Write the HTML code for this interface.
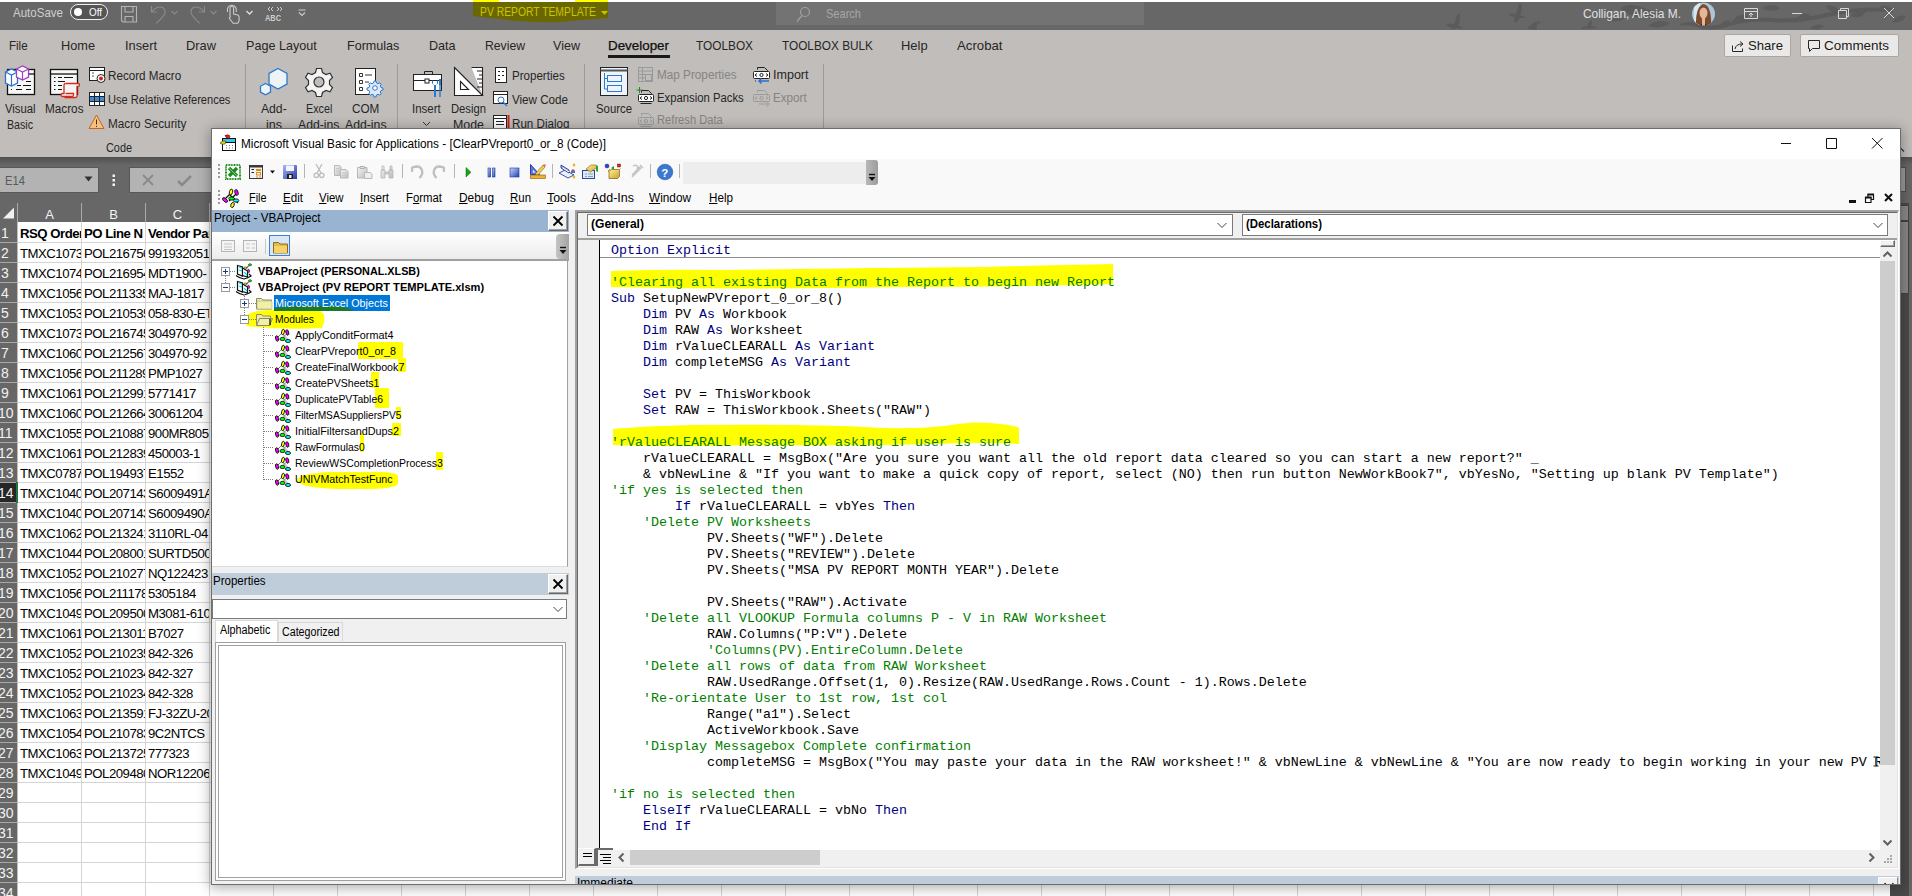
<!DOCTYPE html>
<html><head><meta charset="utf-8">
<style>
*{margin:0;padding:0;box-sizing:border-box}
html,body{width:1912px;height:896px;overflow:hidden;background:#676767}
body{position:relative;font-family:"Liberation Sans",sans-serif}
.a{position:absolute}
svg.a{overflow:visible}
.t{position:absolute;white-space:nowrap;line-height:1}
.rt{font-size:12.6px;color:#262626}
.rb{font-size:12px;color:#262626}
.sep{position:absolute;width:1px;background:#9e9a97}
.cell{position:absolute;font-size:13.2px;color:#000;overflow:hidden;white-space:nowrap;height:19px;line-height:19px}
.mono{font-family:"Liberation Mono",monospace;font-size:13.33px;line-height:16px;white-space:pre}
.cm{color:#008000}
.kw{color:#00007f}
.btn3d{background:#f0f0f0;border-top:1px solid #fff;border-left:1px solid #fff;border-right:1px solid #696969;border-bottom:1px solid #696969;box-shadow:inset -1px -1px 0 #a0a0a0}
u{text-decoration:underline;text-underline-offset:1px}
</style></head><body>
<!--collapse-->
<div class="a" style="left:0;top:0;width:1912px;height:2px;background:#fff"></div>
<div class="a" style="left:0;top:2px;width:1912px;height:28px;background:#676767"></div>
<div class="a" style="left:0;top:30px;width:1912px;height:127px;background:#c1bdba"></div>
<div class="a" style="left:18px;top:222px;width:1872px;height:674px;background:#fff"></div>
<div class="a" style="left:1890px;top:203px;width:22px;height:693px;background:#4a4a4a"></div>
<div class="a" style="left:1909px;top:157px;width:3px;height:739px;background:#676767"></div>
<div class="a" style="left:1900px;top:167px;width:6px;height:25px;background:#9a9a9a;border:1px solid #505050"></div>
<div class="a" style="left:1900px;top:205px;width:9px;height:16px;background:#8a8a8a;border:1px solid #444"></div>
<div class="a" style="left:1900px;top:221px;width:9px;height:73px;background:#888;border:1px solid #444"></div>
<svg class="a" style="left:1895px;top:146px" width="10" height="7"><path d="M1 5.5l4-4 4 4" fill="none" stroke="#333" stroke-width="1.2"></path></svg>
<div class="a" style="left:0;top:157px;width:1912px;height:8px;background:linear-gradient(#505050,#676767)"></div>
<div class="a" style="left:-1px;top:167px;width:100px;height:26px;background:#b3b3b3;border:1px solid #585858"></div>
<span class="t f" style="left: 5px; top: 174px; font-size: 13px; color: rgb(90, 90, 90); --w: 20px; display: inline-block; transform-origin: 0px 0px; transform: scaleX(0.8643);">E14</span>
<svg class="a" style="left:84px;top:176px" width="9" height="6"><path d="M0.5 0.5h8l-4 5z" fill="#333"></path></svg>
<svg class="a" style="left:112px;top:174px" width="4" height="13" fill="#f4f4f4"><rect x="0.5" y="0.5" width="2.5" height="2.5"></rect><rect x="0.5" y="5" width="2.5" height="2.5"></rect><rect x="0.5" y="9.5" width="2.5" height="2.5"></rect></svg>
<div class="a" style="left:129px;top:167px;width:90px;height:26px;background:#b3b3b3;border:1px solid #585858"></div>
<svg class="a" style="left:142px;top:174px" width="52" height="14" fill="none" stroke="#8a8a8a" stroke-width="1.8"><path d="M1 1l10 10 M11 1l-10 10"></path><path d="M36 7l4 4 9-9" stroke-width="2.6"></path></svg>
<svg class="a" style="left:2px;top:207px" width="13" height="12"><path d="M12 0.5v11h-11z" fill="#f0f0f0"></path></svg>
<div class="a" style="left:17px;top:203px;width:1px;height:19px;background:#a9a9a9"></div>
<div class="a" style="left:81px;top:203px;width:1px;height:19px;background:#a9a9a9"></div>
<div class="a" style="left:145px;top:203px;width:1px;height:19px;background:#a9a9a9"></div>
<div class="a" style="left:209px;top:203px;width:1px;height:19px;background:#a9a9a9"></div>
<span class="t" style="left:39.5px;top:208px;width:20px;text-align:center;font-size:13px;color:#f4f4f4">A</span>
<span class="t" style="left:103.5px;top:208px;width:20px;text-align:center;font-size:13px;color:#f4f4f4">B</span>
<span class="t" style="left:167.5px;top:208px;width:20px;text-align:center;font-size:13px;color:#f4f4f4">C</span>
<div class="a" style="left:0;top:222px;width:18px;height:674px;background:#676767"></div>
<div class="a" style="left:17px;top:222px;width:1px;height:674px;background:#bdbdbd"></div>
<div class="a" style="left:81px;top:222px;width:1px;height:674px;background:#d4d4d4"></div>
<div class="a" style="left:145px;top:222px;width:1px;height:674px;background:#d4d4d4"></div>
<div class="a" style="left:209px;top:222px;width:1px;height:674px;background:#d4d4d4"></div>
<div class="a" style="left:273px;top:222px;width:1px;height:674px;background:#d4d4d4"></div>
<div class="a" style="left:337px;top:222px;width:1px;height:674px;background:#d4d4d4"></div>
<div class="a" style="left:401px;top:222px;width:1px;height:674px;background:#d4d4d4"></div>
<div class="a" style="left:465px;top:222px;width:1px;height:674px;background:#d4d4d4"></div>
<div class="a" style="left:529px;top:222px;width:1px;height:674px;background:#d4d4d4"></div>
<div class="a" style="left:593px;top:222px;width:1px;height:674px;background:#d4d4d4"></div>
<div class="a" style="left:657px;top:222px;width:1px;height:674px;background:#d4d4d4"></div>
<div class="a" style="left:721px;top:222px;width:1px;height:674px;background:#d4d4d4"></div>
<div class="a" style="left:785px;top:222px;width:1px;height:674px;background:#d4d4d4"></div>
<div class="a" style="left:849px;top:222px;width:1px;height:674px;background:#d4d4d4"></div>
<div class="a" style="left:913px;top:222px;width:1px;height:674px;background:#d4d4d4"></div>
<div class="a" style="left:977px;top:222px;width:1px;height:674px;background:#d4d4d4"></div>
<div class="a" style="left:1041px;top:222px;width:1px;height:674px;background:#d4d4d4"></div>
<div class="a" style="left:1105px;top:222px;width:1px;height:674px;background:#d4d4d4"></div>
<div class="a" style="left:1169px;top:222px;width:1px;height:674px;background:#d4d4d4"></div>
<div class="a" style="left:1233px;top:222px;width:1px;height:674px;background:#d4d4d4"></div>
<div class="a" style="left:1297px;top:222px;width:1px;height:674px;background:#d4d4d4"></div>
<div class="a" style="left:1361px;top:222px;width:1px;height:674px;background:#d4d4d4"></div>
<div class="a" style="left:1425px;top:222px;width:1px;height:674px;background:#d4d4d4"></div>
<div class="a" style="left:1489px;top:222px;width:1px;height:674px;background:#d4d4d4"></div>
<div class="a" style="left:1553px;top:222px;width:1px;height:674px;background:#d4d4d4"></div>
<div class="a" style="left:1617px;top:222px;width:1px;height:674px;background:#d4d4d4"></div>
<div class="a" style="left:1681px;top:222px;width:1px;height:674px;background:#d4d4d4"></div>
<div class="a" style="left:1745px;top:222px;width:1px;height:674px;background:#d4d4d4"></div>
<div class="a" style="left:1809px;top:222px;width:1px;height:674px;background:#d4d4d4"></div>
<div class="a" style="left:1873px;top:222px;width:1px;height:674px;background:#d4d4d4"></div>
<div class="a" style="left:1937px;top:222px;width:1px;height:674px;background:#d4d4d4"></div>
<div class="a" style="left:18px;top:242px;width:1872px;height:1px;background:#d4d4d4"></div>
<div class="a" style="left:0;top:242px;width:17px;height:1px;background:#a8a8a8"></div>
<div class="a" style="left:18px;top:262px;width:1872px;height:1px;background:#d4d4d4"></div>
<div class="a" style="left:0;top:262px;width:17px;height:1px;background:#a8a8a8"></div>
<div class="a" style="left:18px;top:282px;width:1872px;height:1px;background:#d4d4d4"></div>
<div class="a" style="left:0;top:282px;width:17px;height:1px;background:#a8a8a8"></div>
<div class="a" style="left:18px;top:302px;width:1872px;height:1px;background:#d4d4d4"></div>
<div class="a" style="left:0;top:302px;width:17px;height:1px;background:#a8a8a8"></div>
<div class="a" style="left:18px;top:322px;width:1872px;height:1px;background:#d4d4d4"></div>
<div class="a" style="left:0;top:322px;width:17px;height:1px;background:#a8a8a8"></div>
<div class="a" style="left:18px;top:342px;width:1872px;height:1px;background:#d4d4d4"></div>
<div class="a" style="left:0;top:342px;width:17px;height:1px;background:#a8a8a8"></div>
<div class="a" style="left:18px;top:362px;width:1872px;height:1px;background:#d4d4d4"></div>
<div class="a" style="left:0;top:362px;width:17px;height:1px;background:#a8a8a8"></div>
<div class="a" style="left:18px;top:382px;width:1872px;height:1px;background:#d4d4d4"></div>
<div class="a" style="left:0;top:382px;width:17px;height:1px;background:#a8a8a8"></div>
<div class="a" style="left:18px;top:402px;width:1872px;height:1px;background:#d4d4d4"></div>
<div class="a" style="left:0;top:402px;width:17px;height:1px;background:#a8a8a8"></div>
<div class="a" style="left:18px;top:422px;width:1872px;height:1px;background:#d4d4d4"></div>
<div class="a" style="left:0;top:422px;width:17px;height:1px;background:#a8a8a8"></div>
<div class="a" style="left:18px;top:442px;width:1872px;height:1px;background:#d4d4d4"></div>
<div class="a" style="left:0;top:442px;width:17px;height:1px;background:#a8a8a8"></div>
<div class="a" style="left:18px;top:462px;width:1872px;height:1px;background:#d4d4d4"></div>
<div class="a" style="left:0;top:462px;width:17px;height:1px;background:#a8a8a8"></div>
<div class="a" style="left:18px;top:482px;width:1872px;height:1px;background:#d4d4d4"></div>
<div class="a" style="left:0;top:482px;width:17px;height:1px;background:#a8a8a8"></div>
<div class="a" style="left:18px;top:502px;width:1872px;height:1px;background:#d4d4d4"></div>
<div class="a" style="left:0;top:502px;width:17px;height:1px;background:#a8a8a8"></div>
<div class="a" style="left:18px;top:522px;width:1872px;height:1px;background:#d4d4d4"></div>
<div class="a" style="left:0;top:522px;width:17px;height:1px;background:#a8a8a8"></div>
<div class="a" style="left:18px;top:542px;width:1872px;height:1px;background:#d4d4d4"></div>
<div class="a" style="left:0;top:542px;width:17px;height:1px;background:#a8a8a8"></div>
<div class="a" style="left:18px;top:562px;width:1872px;height:1px;background:#d4d4d4"></div>
<div class="a" style="left:0;top:562px;width:17px;height:1px;background:#a8a8a8"></div>
<div class="a" style="left:18px;top:582px;width:1872px;height:1px;background:#d4d4d4"></div>
<div class="a" style="left:0;top:582px;width:17px;height:1px;background:#a8a8a8"></div>
<div class="a" style="left:18px;top:602px;width:1872px;height:1px;background:#d4d4d4"></div>
<div class="a" style="left:0;top:602px;width:17px;height:1px;background:#a8a8a8"></div>
<div class="a" style="left:18px;top:622px;width:1872px;height:1px;background:#d4d4d4"></div>
<div class="a" style="left:0;top:622px;width:17px;height:1px;background:#a8a8a8"></div>
<div class="a" style="left:18px;top:642px;width:1872px;height:1px;background:#d4d4d4"></div>
<div class="a" style="left:0;top:642px;width:17px;height:1px;background:#a8a8a8"></div>
<div class="a" style="left:18px;top:662px;width:1872px;height:1px;background:#d4d4d4"></div>
<div class="a" style="left:0;top:662px;width:17px;height:1px;background:#a8a8a8"></div>
<div class="a" style="left:18px;top:682px;width:1872px;height:1px;background:#d4d4d4"></div>
<div class="a" style="left:0;top:682px;width:17px;height:1px;background:#a8a8a8"></div>
<div class="a" style="left:18px;top:702px;width:1872px;height:1px;background:#d4d4d4"></div>
<div class="a" style="left:0;top:702px;width:17px;height:1px;background:#a8a8a8"></div>
<div class="a" style="left:18px;top:722px;width:1872px;height:1px;background:#d4d4d4"></div>
<div class="a" style="left:0;top:722px;width:17px;height:1px;background:#a8a8a8"></div>
<div class="a" style="left:18px;top:742px;width:1872px;height:1px;background:#d4d4d4"></div>
<div class="a" style="left:0;top:742px;width:17px;height:1px;background:#a8a8a8"></div>
<div class="a" style="left:18px;top:762px;width:1872px;height:1px;background:#d4d4d4"></div>
<div class="a" style="left:0;top:762px;width:17px;height:1px;background:#a8a8a8"></div>
<div class="a" style="left:18px;top:782px;width:1872px;height:1px;background:#d4d4d4"></div>
<div class="a" style="left:0;top:782px;width:17px;height:1px;background:#a8a8a8"></div>
<div class="a" style="left:18px;top:802px;width:1872px;height:1px;background:#d4d4d4"></div>
<div class="a" style="left:0;top:802px;width:17px;height:1px;background:#a8a8a8"></div>
<div class="a" style="left:18px;top:822px;width:1872px;height:1px;background:#d4d4d4"></div>
<div class="a" style="left:0;top:822px;width:17px;height:1px;background:#a8a8a8"></div>
<div class="a" style="left:18px;top:842px;width:1872px;height:1px;background:#d4d4d4"></div>
<div class="a" style="left:0;top:842px;width:17px;height:1px;background:#a8a8a8"></div>
<div class="a" style="left:18px;top:862px;width:1872px;height:1px;background:#d4d4d4"></div>
<div class="a" style="left:0;top:862px;width:17px;height:1px;background:#a8a8a8"></div>
<div class="a" style="left:18px;top:882px;width:1872px;height:1px;background:#d4d4d4"></div>
<div class="a" style="left:0;top:882px;width:17px;height:1px;background:#a8a8a8"></div>
<div class="a" style="left:18px;top:902px;width:1872px;height:1px;background:#d4d4d4"></div>
<div class="a" style="left:0;top:902px;width:17px;height:1px;background:#a8a8a8"></div>
<div class="a" style="left:0;top:483px;width:16px;height:19px;background:#262626"></div>
<div class="a" style="left:16px;top:482px;width:2px;height:21px;background:#217346"></div>
<span class="t" style="left:1px;top:226px;font-size:14px;color:#f2f2f2">1</span>
<span class="t" style="left:1px;top:246px;font-size:14px;color:#f2f2f2">2</span>
<span class="t" style="left:1px;top:266px;font-size:14px;color:#f2f2f2">3</span>
<span class="t" style="left:1px;top:286px;font-size:14px;color:#f2f2f2">4</span>
<span class="t" style="left:1px;top:306px;font-size:14px;color:#f2f2f2">5</span>
<span class="t" style="left:1px;top:326px;font-size:14px;color:#f2f2f2">6</span>
<span class="t" style="left:1px;top:346px;font-size:14px;color:#f2f2f2">7</span>
<span class="t" style="left:1px;top:366px;font-size:14px;color:#f2f2f2">8</span>
<span class="t" style="left:1px;top:386px;font-size:14px;color:#f2f2f2">9</span>
<span class="t" style="left:-2px;top:406px;font-size:14px;color:#f2f2f2">10</span>
<span class="t" style="left:-2px;top:426px;font-size:14px;color:#f2f2f2">11</span>
<span class="t" style="left:-2px;top:446px;font-size:14px;color:#f2f2f2">12</span>
<span class="t" style="left:-2px;top:466px;font-size:14px;color:#f2f2f2">13</span>
<span class="t" style="left:-2px;top:486px;font-size:14px;color:#f2f2f2">14</span>
<span class="t" style="left:-2px;top:506px;font-size:14px;color:#f2f2f2">15</span>
<span class="t" style="left:-2px;top:526px;font-size:14px;color:#f2f2f2">16</span>
<span class="t" style="left:-2px;top:546px;font-size:14px;color:#f2f2f2">17</span>
<span class="t" style="left:-2px;top:566px;font-size:14px;color:#f2f2f2">18</span>
<span class="t" style="left:-2px;top:586px;font-size:14px;color:#f2f2f2">19</span>
<span class="t" style="left:-2px;top:606px;font-size:14px;color:#f2f2f2">20</span>
<span class="t" style="left:-2px;top:626px;font-size:14px;color:#f2f2f2">21</span>
<span class="t" style="left:-2px;top:646px;font-size:14px;color:#f2f2f2">22</span>
<span class="t" style="left:-2px;top:666px;font-size:14px;color:#f2f2f2">23</span>
<span class="t" style="left:-2px;top:686px;font-size:14px;color:#f2f2f2">24</span>
<span class="t" style="left:-2px;top:706px;font-size:14px;color:#f2f2f2">25</span>
<span class="t" style="left:-2px;top:726px;font-size:14px;color:#f2f2f2">26</span>
<span class="t" style="left:-2px;top:746px;font-size:14px;color:#f2f2f2">27</span>
<span class="t" style="left:-2px;top:766px;font-size:14px;color:#f2f2f2">28</span>
<span class="t" style="left:-2px;top:786px;font-size:14px;color:#f2f2f2">29</span>
<span class="t" style="left:-2px;top:806px;font-size:14px;color:#f2f2f2">30</span>
<span class="t" style="left:-2px;top:826px;font-size:14px;color:#f2f2f2">31</span>
<span class="t" style="left:-2px;top:846px;font-size:14px;color:#f2f2f2">32</span>
<span class="t" style="left:-2px;top:866px;font-size:14px;color:#f2f2f2">33</span>
<span class="t" style="left:-2px;top:886px;font-size:14px;color:#f2f2f2">34</span>
<div class="cell" style="left:18px;top:224px;letter-spacing:-0.5px;width:63px;padding-left:2px;font-weight:bold;">RSQ Order</div>
<div class="cell" style="left:82px;top:224px;letter-spacing:-0.5px;width:63px;padding-left:2px;font-weight:bold;">PO Line N</div>
<div class="cell" style="left:146px;top:224px;letter-spacing:-0.5px;width:63px;padding-left:2px;font-weight:bold;">Vendor Part</div>
<div class="cell" style="left:18px;top:244px;letter-spacing:-0.5px;width:63px;padding-left:2px;">TMXC10739</div>
<div class="cell" style="left:82px;top:244px;letter-spacing:-0.5px;width:63px;padding-left:2px;">POL2167501</div>
<div class="cell" style="left:146px;top:244px;letter-spacing:-0.5px;width:63px;padding-left:2px;">991932051</div>
<div class="cell" style="left:18px;top:264px;letter-spacing:-0.5px;width:63px;padding-left:2px;">TMXC10749</div>
<div class="cell" style="left:82px;top:264px;letter-spacing:-0.5px;width:63px;padding-left:2px;">POL2169541</div>
<div class="cell" style="left:146px;top:264px;letter-spacing:-0.5px;width:63px;padding-left:2px;">MDT1900-</div>
<div class="cell" style="left:18px;top:284px;letter-spacing:-0.5px;width:63px;padding-left:2px;">TMXC10569</div>
<div class="cell" style="left:82px;top:284px;letter-spacing:-0.5px;width:63px;padding-left:2px;">POL2113351</div>
<div class="cell" style="left:146px;top:284px;letter-spacing:-0.5px;width:63px;padding-left:2px;">MAJ-1817</div>
<div class="cell" style="left:18px;top:304px;letter-spacing:-0.5px;width:63px;padding-left:2px;">TMXC10539</div>
<div class="cell" style="left:82px;top:304px;letter-spacing:-0.5px;width:63px;padding-left:2px;">POL2105351</div>
<div class="cell" style="left:146px;top:304px;letter-spacing:-0.5px;width:63px;padding-left:2px;">058-830-ET</div>
<div class="cell" style="left:18px;top:324px;letter-spacing:-0.5px;width:63px;padding-left:2px;">TMXC10739</div>
<div class="cell" style="left:82px;top:324px;letter-spacing:-0.5px;width:63px;padding-left:2px;">POL2167451</div>
<div class="cell" style="left:146px;top:324px;letter-spacing:-0.5px;width:63px;padding-left:2px;">304970-92</div>
<div class="cell" style="left:18px;top:344px;letter-spacing:-0.5px;width:63px;padding-left:2px;">TMXC10609</div>
<div class="cell" style="left:82px;top:344px;letter-spacing:-0.5px;width:63px;padding-left:2px;">POL2125671</div>
<div class="cell" style="left:146px;top:344px;letter-spacing:-0.5px;width:63px;padding-left:2px;">304970-92</div>
<div class="cell" style="left:18px;top:364px;letter-spacing:-0.5px;width:63px;padding-left:2px;">TMXC10569</div>
<div class="cell" style="left:82px;top:364px;letter-spacing:-0.5px;width:63px;padding-left:2px;">POL2112891</div>
<div class="cell" style="left:146px;top:364px;letter-spacing:-0.5px;width:63px;padding-left:2px;">PMP1027</div>
<div class="cell" style="left:18px;top:384px;letter-spacing:-0.5px;width:63px;padding-left:2px;">TMXC10619</div>
<div class="cell" style="left:82px;top:384px;letter-spacing:-0.5px;width:63px;padding-left:2px;">POL2129911</div>
<div class="cell" style="left:146px;top:384px;letter-spacing:-0.5px;width:63px;padding-left:2px;">5771417</div>
<div class="cell" style="left:18px;top:404px;letter-spacing:-0.5px;width:63px;padding-left:2px;">TMXC10609</div>
<div class="cell" style="left:82px;top:404px;letter-spacing:-0.5px;width:63px;padding-left:2px;">POL2126641</div>
<div class="cell" style="left:146px;top:404px;letter-spacing:-0.5px;width:63px;padding-left:2px;">30061204</div>
<div class="cell" style="left:18px;top:424px;letter-spacing:-0.5px;width:63px;padding-left:2px;">TMXC10559</div>
<div class="cell" style="left:82px;top:424px;letter-spacing:-0.5px;width:63px;padding-left:2px;">POL2108871</div>
<div class="cell" style="left:146px;top:424px;letter-spacing:-0.5px;width:63px;padding-left:2px;">900MR805</div>
<div class="cell" style="left:18px;top:444px;letter-spacing:-0.5px;width:63px;padding-left:2px;">TMXC10619</div>
<div class="cell" style="left:82px;top:444px;letter-spacing:-0.5px;width:63px;padding-left:2px;">POL2128391</div>
<div class="cell" style="left:146px;top:444px;letter-spacing:-0.5px;width:63px;padding-left:2px;">450003-1</div>
<div class="cell" style="left:18px;top:464px;letter-spacing:-0.5px;width:63px;padding-left:2px;">TMXC07879</div>
<div class="cell" style="left:82px;top:464px;letter-spacing:-0.5px;width:63px;padding-left:2px;">POL1949371</div>
<div class="cell" style="left:146px;top:464px;letter-spacing:-0.5px;width:63px;padding-left:2px;">E1552</div>
<div class="cell" style="left:18px;top:484px;letter-spacing:-0.5px;width:63px;padding-left:2px;">TMXC10409</div>
<div class="cell" style="left:82px;top:484px;letter-spacing:-0.5px;width:63px;padding-left:2px;">POL2071431</div>
<div class="cell" style="left:146px;top:484px;letter-spacing:-0.5px;width:63px;padding-left:2px;">S6009491A</div>
<div class="cell" style="left:18px;top:504px;letter-spacing:-0.5px;width:63px;padding-left:2px;">TMXC10409</div>
<div class="cell" style="left:82px;top:504px;letter-spacing:-0.5px;width:63px;padding-left:2px;">POL2071431</div>
<div class="cell" style="left:146px;top:504px;letter-spacing:-0.5px;width:63px;padding-left:2px;">S6009490A</div>
<div class="cell" style="left:18px;top:524px;letter-spacing:-0.5px;width:63px;padding-left:2px;">TMXC10629</div>
<div class="cell" style="left:82px;top:524px;letter-spacing:-0.5px;width:63px;padding-left:2px;">POL2132411</div>
<div class="cell" style="left:146px;top:524px;letter-spacing:-0.5px;width:63px;padding-left:2px;">3110RL-04</div>
<div class="cell" style="left:18px;top:544px;letter-spacing:-0.5px;width:63px;padding-left:2px;">TMXC10449</div>
<div class="cell" style="left:82px;top:544px;letter-spacing:-0.5px;width:63px;padding-left:2px;">POL2080011</div>
<div class="cell" style="left:146px;top:544px;letter-spacing:-0.5px;width:63px;padding-left:2px;">SURTD500</div>
<div class="cell" style="left:18px;top:564px;letter-spacing:-0.5px;width:63px;padding-left:2px;">TMXC10529</div>
<div class="cell" style="left:82px;top:564px;letter-spacing:-0.5px;width:63px;padding-left:2px;">POL2102771</div>
<div class="cell" style="left:146px;top:564px;letter-spacing:-0.5px;width:63px;padding-left:2px;">NQ122423</div>
<div class="cell" style="left:18px;top:584px;letter-spacing:-0.5px;width:63px;padding-left:2px;">TMXC10569</div>
<div class="cell" style="left:82px;top:584px;letter-spacing:-0.5px;width:63px;padding-left:2px;">POL2111781</div>
<div class="cell" style="left:146px;top:584px;letter-spacing:-0.5px;width:63px;padding-left:2px;">5305184</div>
<div class="cell" style="left:18px;top:604px;letter-spacing:-0.5px;width:63px;padding-left:2px;">TMXC10499</div>
<div class="cell" style="left:82px;top:604px;letter-spacing:-0.5px;width:63px;padding-left:2px;">POL2095001</div>
<div class="cell" style="left:146px;top:604px;letter-spacing:-0.5px;width:63px;padding-left:2px;">M3081-610</div>
<div class="cell" style="left:18px;top:624px;letter-spacing:-0.5px;width:63px;padding-left:2px;">TMXC10619</div>
<div class="cell" style="left:82px;top:624px;letter-spacing:-0.5px;width:63px;padding-left:2px;">POL2130111</div>
<div class="cell" style="left:146px;top:624px;letter-spacing:-0.5px;width:63px;padding-left:2px;">B7027</div>
<div class="cell" style="left:18px;top:644px;letter-spacing:-0.5px;width:63px;padding-left:2px;">TMXC10529</div>
<div class="cell" style="left:82px;top:644px;letter-spacing:-0.5px;width:63px;padding-left:2px;">POL2102351</div>
<div class="cell" style="left:146px;top:644px;letter-spacing:-0.5px;width:63px;padding-left:2px;">842-326</div>
<div class="cell" style="left:18px;top:664px;letter-spacing:-0.5px;width:63px;padding-left:2px;">TMXC10529</div>
<div class="cell" style="left:82px;top:664px;letter-spacing:-0.5px;width:63px;padding-left:2px;">POL2102341</div>
<div class="cell" style="left:146px;top:664px;letter-spacing:-0.5px;width:63px;padding-left:2px;">842-327</div>
<div class="cell" style="left:18px;top:684px;letter-spacing:-0.5px;width:63px;padding-left:2px;">TMXC10529</div>
<div class="cell" style="left:82px;top:684px;letter-spacing:-0.5px;width:63px;padding-left:2px;">POL2102341</div>
<div class="cell" style="left:146px;top:684px;letter-spacing:-0.5px;width:63px;padding-left:2px;">842-328</div>
<div class="cell" style="left:18px;top:704px;letter-spacing:-0.5px;width:63px;padding-left:2px;">TMXC10639</div>
<div class="cell" style="left:82px;top:704px;letter-spacing:-0.5px;width:63px;padding-left:2px;">POL2135911</div>
<div class="cell" style="left:146px;top:704px;letter-spacing:-0.5px;width:63px;padding-left:2px;">FJ-32ZU-20</div>
<div class="cell" style="left:18px;top:724px;letter-spacing:-0.5px;width:63px;padding-left:2px;">TMXC10549</div>
<div class="cell" style="left:82px;top:724px;letter-spacing:-0.5px;width:63px;padding-left:2px;">POL2107831</div>
<div class="cell" style="left:146px;top:724px;letter-spacing:-0.5px;width:63px;padding-left:2px;">9C2NTCS</div>
<div class="cell" style="left:18px;top:744px;letter-spacing:-0.5px;width:63px;padding-left:2px;">TMXC10639</div>
<div class="cell" style="left:82px;top:744px;letter-spacing:-0.5px;width:63px;padding-left:2px;">POL2137251</div>
<div class="cell" style="left:146px;top:744px;letter-spacing:-0.5px;width:63px;padding-left:2px;">777323</div>
<div class="cell" style="left:18px;top:764px;letter-spacing:-0.5px;width:63px;padding-left:2px;">TMXC10499</div>
<div class="cell" style="left:82px;top:764px;letter-spacing:-0.5px;width:63px;padding-left:2px;">POL2094801</div>
<div class="cell" style="left:146px;top:764px;letter-spacing:-0.5px;width:63px;padding-left:2px;">NOR12206</div>
<!-- TITLE BAR -->
<div class="a" style="left:473px;top:0;width:26px;height:2px;background:#ffff00"></div>
<div class="a" style="left:575px;top:0;width:33px;height:2px;background:#ffff00"></div>
<svg class="a" style="left:1380px;top:2px;overflow:hidden" width="532" height="28">
 <g fill="#5b5b5b">
  <path d="M66 22 q5-1 8 0 l3-9 q2-3 3 1 q0 6-2 10 q3 0 5 2 q-3 1-6 0 q-3 2-6 0 q-3-1-5-4z"></path>
  <path d="M128 12 q5-1 8 0 l3-10 q3-2 3 2 q0 5-2 9 q4 1 6 3 q-4 0-6 0 q-2 4-5 5 q-1-4-1-6 q-3-1-6-3z"></path>
  <path d="M147 27 q3-5 8-7 q3-1 6 0 q-2 2-4 3 q-1 3 0 5z"></path>
  <path d="M200 27 q4-3 7-3 q2-5 5-6 q0 4-1 6 q4 0 6 2z"></path>
  <path d="M240 6 q10-6 24 0 q10 5 20 2 q-8 10-22 8 q-14-2-22-10z"></path>
  <path d="M226 18 q8-6 18-2 q-6 6-18 2z M268 24 q10-8 22-3 q-10 7-22 3z"></path>
  <path d="M300 22 q10-4 20 0 q12 4 30-2 q20-6 40-4 q30 2 60-6 q30-6 62-4 v4 q-30-2-60 4 q-30 8-62 6 q-20-2-40 4 q-18 6-30 2 q-10-4-20-2z"></path>
  <path d="M312 8 q8-8 16-2 q-6 8-16 2z M352 20 q6-10 16-6 q-6 8-16 6z M382 6 q10-6 18 0 q-8 6-18 0z M414 20 q6-10 16-8 q-4 10-16 8z M446 4 q10-2 14 6 q-10 2-14-6z M470 14 q8-8 16-4 q-6 8-16 4z M500 4 q8-2 14 6 q-8 2-14-6z M512 20 q6-8 14-6 q-4 8-14 6z M338 26 q4-8 12-8 q-2 8-12 8z M430 26 q8-6 14-2 q-6 6-14 2z"></path>
 </g>
</svg>
<span class="t f" style="left: 13px; top: 6px; font-size: 13px; color: rgb(207, 207, 207); --w: 50px; display: inline-block; transform-origin: 0px 0px; transform: scaleX(0.8869);">AutoSave</span>
<div class="a" style="left:70px;top:4px;width:38px;height:16px;border:1.5px solid #f0f0f0;border-radius:8px;background:#555"></div>
<div class="a" style="left:74px;top:8px;width:8px;height:8px;border-radius:50%;background:#fff"></div>
<span class="t f" style="left: 89px; top: 7px; font-size: 11px; color: rgb(255, 255, 255); --w: 13px; display: inline-block; transform-origin: 0px 0px; transform: scaleX(0.8975);">Off</span>
<svg class="a" style="left:110px;top:0" width="200" height="30" fill="none" stroke-width="1.1">
 <g stroke="#b4b4b4"><path d="M11.5 6.5h15v15.5h-13.5l-1.5-1.5z"></path><path d="M15 6.5v5.5h8v-5.5 M15 22v-5.5h8v5.5"></path></g>
 <g stroke="#8c8c8c"><path d="M41.5 6v6h5.5"></path><path d="M41.8 11.8q5-6 10-4.5q4 1.5 3 6q-1 3-8.5 10"></path><path d="M61.5 11l3 3 3-3"></path>
 <path d="M94.5 6v6h-5.5"></path><path d="M94.2 11.8q-5-6-10-4.5q-4 1.5-3 6q1 3 8.5 10"></path><path d="M100.5 11l3 3 3-3"></path></g>
 <g stroke="#cdcdcd"><path d="M120 15v-6.5q0-2 1.8-2q1.8 0 1.8 2v5.5l3.5.8q2 .5 2 2.5v2.5q0 2-1.5 3.5h-4.5l-3.5-4.5q-.6-1 .5-1.5z"></path><path d="M117.5 12q-1-6 4.3-6.8q5.3.8 4.5 6.8"></path>
 <path d="M136.5 11l3 3 3-3" stroke="#dcdcdc" stroke-width="1.4"></path>
 <path d="M160 7l-2 2 2 2 M163 7l-2 2 2 2 M167 7l2 2-2 2 M170 7l2 2-2 2" stroke-width="1"></path>
 <path d="M188.5 10h7 M189 12.5l3 3 3-3"></path></g>
 <text x="155" y="20.5" font-family="Liberation Sans" font-size="8.6" font-weight="bold" fill="#cdcdcd" stroke="none" textLength="16" lengthAdjust="spacingAndGlyphs">ABC</text>
</svg>
<svg class="a" style="left:470px;top:0" width="142" height="24"><path d="M3 2 L138 2 L138 18 Q110 20 90 22 Q60 23 30 19 Q10 17 3 16z" fill="#6b6700"></path></svg>
<span class="t f" style="left: 480px; top: 6px; font-size: 12.5px; color: rgb(201, 196, 0); --w: 116px; display: inline-block; transform-origin: 0px 0px; transform: scaleX(0.828);">PV REPORT TEMPLATE</span>
<svg class="a" style="left:600px;top:10px" width="10" height="6"><path d="M1 1h7l-3.5 4z" fill="#c8c000"></path></svg>
<div class="a" style="left:776px;top:2px;width:368px;height:23px;background:#737373"></div>
<svg class="a" style="left:795px;top:5px" width="18" height="18" fill="none" stroke="#a0a0a0" stroke-width="1.2"><circle cx="10" cy="7" r="4.5"></circle><path d="M7 10.5l-5 6"></path></svg>
<span class="t f" style="left: 826px; top: 7px; font-size: 13px; color: rgb(166, 166, 166); --w: 35px; display: inline-block; transform-origin: 0px 0px; transform: scaleX(0.8495);">Search</span>
<span class="t f" style="left: 1583px; top: 7px; font-size: 13px; color: rgb(224, 224, 224); --w: 98px; display: inline-block; transform-origin: 0px 0px; transform: scaleX(0.9163);">Colligan, Alesia M.</span>
<svg class="a" style="left:1691px;top:2px" width="25" height="25"><defs><clipPath id="av"><circle cx="12.5" cy="12" r="11.5"></circle></clipPath></defs>
 <g clip-path="url(#av)"><rect width="25" height="25" fill="#a9c6dc"></rect><path d="M3 0h6v25h-6z" fill="#d8e8f0"></path><path d="M5 25 Q4 6 12 2 Q21 3 20 25z" fill="#7a4a2a"></path><ellipse cx="12.5" cy="11" rx="4" ry="5.5" fill="#e3b59a"></ellipse><path d="M8 25 q4.5-8 9 0z" fill="#2a2a2a"></path><path d="M11 16v9h3v-9" fill="#e3b59a"></path></g></svg>
<svg class="a" style="left:1740px;top:5px" width="160" height="18" fill="none" stroke="#d8d8d8" stroke-width="1">
 <path d="M4.5 3.5h13v10h-13z M4.5 6.5h13 M11 12v-4 M9 10l2-2 2 2"></path>
 <path d="M52 8.5h10"></path>
 <path d="M98.5 5.5h8v8h-8z M100.5 5.5v-2h8v8h-2"></path>
 <path d="M144 3l10 10 M154 3l-10 10"></path>
</svg>
<!-- RIBBON TABS -->
<span class="t rt f" style="top: 40px; left: 9px; --w: 18.6px; display: inline-block; transform-origin: 0px 0px; transform: scaleX(0.9164);">File</span>
<span class="t rt f" style="top: 40px; left: 61px; --w: 34px; display: inline-block; transform-origin: 0px 0px; transform: scaleX(1.0121);">Home</span>
<span class="t rt f" style="top: 40px; left: 125px; --w: 32px; display: inline-block; transform-origin: 0px 0px; transform: scaleX(1.0159);">Insert</span>
<span class="t rt f" style="top: 40px; left: 186px; --w: 30px; display: inline-block; transform-origin: 0px 0px; transform: scaleX(1.0207);">Draw</span>
<span class="t rt f" style="top: 40px; left: 246px; --w: 70.7px; display: inline-block; transform-origin: 0px 0px; transform: scaleX(0.9995);">Page Layout</span>
<span class="t rt f" style="top: 40px; left: 347px; --w: 52.3px; display: inline-block; transform-origin: 0px 0px; transform: scaleX(0.9965);">Formulas</span>
<span class="t rt f" style="top: 40px; left: 429px; --w: 26.6px; display: inline-block; transform-origin: 0px 0px; transform: scaleX(0.9996);">Data</span>
<span class="t rt f" style="top: 40px; left: 485px; --w: 40px; display: inline-block; transform-origin: 0px 0px; transform: scaleX(0.9686);">Review</span>
<span class="t rt f" style="top: 40px; left: 553px; --w: 27px; display: inline-block; transform-origin: 0px 0px; transform: scaleX(0.9971);">View</span>
<span class="t rt f" style="top: 40px; left: 608px; --w: 61px; color: rgb(17, 17, 17); -webkit-text-stroke: 0.25px rgb(17, 17, 17); display: inline-block; transform-origin: 0px 0px; transform: scaleX(1.0626);">Developer</span>
<div class="a" style="left:608px;top:55px;width:62px;height:3px;background:#1a1a1a"></div>
<span class="t rt f" style="top: 40px; left: 696px; --w: 57px; display: inline-block; transform-origin: 0px 0px; transform: scaleX(0.9395);">TOOLBOX</span>
<span class="t rt f" style="top: 40px; left: 782px; --w: 91px; display: inline-block; transform-origin: 0px 0px; transform: scaleX(0.9375);">TOOLBOX BULK</span>
<span class="t rt f" style="top: 40px; left: 901px; --w: 26.6px; display: inline-block; transform-origin: 0px 0px; transform: scaleX(1.0268);">Help</span>
<span class="t rt f" style="top: 40px; left: 957px; --w: 45.5px; display: inline-block; transform-origin: 0px 0px; transform: scaleX(1.0482);">Acrobat</span>
<div class="a" style="left:1724px;top:34px;width:67px;height:23px;background:#eae9e8;border:1px solid #a9a6a3;border-radius:2px"></div>
<svg class="a" style="left:1730px;top:38px" width="16" height="16" fill="none" stroke="#262626" stroke-width="1"><path d="M2.5 7.5v6h10v-3 M5 11q1-5 7-5 M10 3.5l3 2.5-3 2.5"></path></svg>
<span class="t f" style="left: 1748px; top: 39px; font-size: 13px; color: rgb(26, 26, 26); --w: 35px; display: inline-block; transform-origin: 0px 0px; transform: scaleX(1.0086);">Share</span>
<div class="a" style="left:1800px;top:34px;width:99px;height:23px;background:#eae9e8;border:1px solid #a9a6a3;border-radius:2px"></div>
<svg class="a" style="left:1806px;top:38px" width="16" height="16" fill="none" stroke="#262626" stroke-width="1"><path d="M2.5 2.5h11v8h-7l-3 3v-3h-1z"></path></svg>
<span class="t f" style="left: 1824px; top: 39px; font-size: 13px; color: rgb(26, 26, 26); --w: 65px; display: inline-block; transform-origin: 0px 0px; transform: scaleX(1.0341);">Comments</span>

<!-- RIBBON GROUPS -->
<div class="sep" style="left:245px;top:64px;height:91px"></div>
<div class="sep" style="left:397px;top:64px;height:91px"></div>
<div class="sep" style="left:584px;top:64px;height:91px"></div>
<div class="sep" style="left:823px;top:64px;height:91px"></div>
<!-- Visual Basic icon -->
<svg class="a" style="left:0;top:62px" width="40" height="36">
 <rect x="7.5" y="7.5" width="27" height="25" fill="#f6f8f8" stroke="#111" stroke-width="1.3"></rect><path d="M7.5 12h27" stroke="#111" stroke-width="1.3"></path>
 <path d="M26 19.5h5 M17 23.5h4 M23 23.5h8 M11 27.5h1 M16 27.5h6 M26 27.5h5" stroke="#111" stroke-width="1.2"></path>
 <path d="M5.5 10l6-3 6 3v11l-6 3-6-3z" fill="#fff" stroke="#2b72d0" stroke-width="1.3"></path><path d="M5.5 10l6 3 6-3 M11.5 13v11" stroke="#2b72d0" fill="none" stroke-width="1.2"></path>
 <path d="M16.5 7l6-3 6 3v8l-6 3-6-3z" fill="#fff" stroke="#a040c0" stroke-width="1.3"></path><path d="M16.5 7l6 3 6-3 M22.5 10v8" stroke="#a040c0" fill="none" stroke-width="1.2"></path>
</svg>
<!-- Macros icon -->
<svg class="a" style="left:48px;top:62px" width="36" height="38">
 <rect x="2.5" y="7.5" width="27" height="25" fill="#f6f8f8" stroke="#111" stroke-width="1.3"></rect><path d="M2.5 12h27" stroke="#111" stroke-width="1.3"></path>
 <path d="M6 15.5h1.5 M10 15.5h4 M16 15.5h9 M6 19.5h1.5 M10 19.5h7 M6 23.5h1.5 M10 23.5h4 M6 27.5h1.5 M10 27.5h4" stroke="#111" stroke-width="1.2"></path>
 <path d="M17.5 21.5h12.5q1.5 0 1.5 1.5t-1.5 1.5h-1v9.5q0 1.5-1.5 1.5h-11" fill="#f4f4f4" stroke="#d42a1a" stroke-width="1.3"></path>
 <path d="M17.5 21.5q-1.5 0-1.5 1.5v8.5h-1.5q-1.5 0-1.5 1.5t1.5 1.5h9.5q1.5 0 1.5-1.5v-1.5h-8" fill="#f4f4f4" stroke="#d42a1a" stroke-width="1.3"></path>
</svg>
<span class="t rb f" style="left: 5px; top: 103px; --w: 30.6px; display: inline-block; transform-origin: 0px 0px; transform: scaleX(0.9424);">Visual</span>
<span class="t rb f" style="left: 7px; top: 119px; --w: 26px; display: inline-block; transform-origin: 0px 0px; transform: scaleX(0.886);">Basic</span>

<span class="t rb f" style="left: 44.5px; top: 103px; --w: 38.5px; display: inline-block; transform-origin: 0px 0px; transform: scaleX(0.9786);">Macros</span>
<!-- small icons -->
<svg class="a" style="left:88px;top:66px" width="20" height="66" fill="none">
 <rect x="1.5" y="1.5" width="15" height="13" fill="#fff" stroke="#222"></rect><path d="M1.5 4.5h15" stroke="#222"></path><path d="M4 7h2 M4 10h2" stroke="#555"></path>
 <circle cx="13" cy="12.5" r="4" fill="#fff" stroke="#222"></circle><circle cx="13" cy="12.5" r="2" fill="#d0211c"></circle>
 <rect x="1.5" y="26.5" width="15" height="13" fill="#fff" stroke="#222"></rect><rect x="2" y="30" width="14" height="5" fill="#3d8ad8"></rect><path d="M1.5 30.5h15 M1.5 35.5h15 M6.5 26.5v13 M11.5 26.5v13" stroke="#222"></path>
 <path d="M8.5 49l7.5 13.5h-15z" fill="#f5c27d" stroke="#c8641e"></path><path d="M8.5 53.5v5 M8.5 60v1" stroke="#333"></path>
</svg>
<span class="t rb f" style="left: 108.4px; top: 70px; --w: 73.2px; display: inline-block; transform-origin: 0px 0px; transform: scaleX(0.9713);">Record Macro</span>
<span class="t rb f" style="left: 108.4px; top: 93.5px; --w: 122.4px; display: inline-block; transform-origin: 0px 0px; transform: scaleX(0.9221);">Use Relative References</span>
<span class="t rb f" style="left: 108.4px; top: 117.5px; --w: 78.3px; display: inline-block; transform-origin: 0px 0px; transform: scaleX(0.9784);">Macro Security</span>
<span class="t rb f" style="left: 105.6px; top: 142px; --w: 26px; display: inline-block; transform-origin: 0px 0px; transform: scaleX(0.9063);">Code</span>
<!-- Add-ins -->
<svg class="a" style="left:259px;top:66px" width="32" height="32" fill="#eef3f6" stroke="#2b79d0" stroke-width="1.3">
 <path d="M19 2.5l9 5v10.5l-9 5-9-5v-10.5z"></path><path d="M6.5 17.5l5 2.8v5.7l-5 2.8-5-2.8v-5.7z"></path>
</svg>
<span class="t rb f" style="left: 261.3px; top: 103px; --w: 25.7px; display: inline-block; transform-origin: 0px 0px; transform: scaleX(1.0134);">Add-</span>
<span class="t rb f" style="left: 266px; top: 119px; --w: 16px; display: inline-block; transform-origin: 0px 0px; transform: scaleX(1.0428);">ins</span>
<svg class="a" style="left:304px;top:67px" width="30" height="30">
 <path d="M12.5 1.5h5l1 4 3.5 2 4-1.3 2.5 4.3-3 3v4l3 3-2.5 4.3-4-1.3-3.5 2-1 4h-5l-1-4-3.5-2-4 1.3-2.5-4.3 3-3v-4l-3-3 2.5-4.3 4 1.3 3.5-2z" fill="#f4f4f4" stroke="#333" stroke-width="1.2"></path>
 <circle cx="15" cy="15" r="5" fill="#c1bdba" stroke="#333" stroke-width="1.2"></circle>
</svg>
<span class="t rb f" style="left: 306.3px; top: 103px; --w: 26.3px; display: inline-block; transform-origin: 0px 0px; transform: scaleX(0.8963);">Excel</span>
<span class="t rb f" style="left: 298.4px; top: 119px; --w: 41.4px; display: inline-block; transform-origin: 0px 0px; transform: scaleX(1.0175);">Add-ins</span>
<svg class="a" style="left:354px;top:67px" width="30" height="31">
 <rect x="1.5" y="1.5" width="20" height="26" fill="#fff" stroke="#222"></rect>
 <path d="M5.5 6.5h3v3h-3z M5.5 13.5h3v3h-3z M5.5 20.5h3v3h-3z M11 8h7 M11 15h4" stroke="#333" fill="none"></path>
 <path d="M20 14l2 0 .5 2 1.5.8 1.8-1 1.4 1.4-1 1.8.8 1.5 2 .5v2l-2 .5-.8 1.5 1 1.8-1.4 1.4-1.8-1-1.5.8-.5 2h-2l-.5-2-1.5-.8-1.8 1-1.4-1.4 1-1.8-.8-1.5-2-.5v-2l2-.5.8-1.5-1-1.8 1.4-1.4 1.8 1 1.5-.8z" fill="#dce9f6" stroke="#2b79d0"></path>
 <circle cx="21" cy="21" r="2.3" fill="#fff" stroke="#2b79d0"></circle>
</svg>
<span class="t rb f" style="left: 352.4px; top: 103px; --w: 27.3px; display: inline-block; transform-origin: 0px 0px; transform: scaleX(0.975);">COM</span>
<span class="t rb f" style="left: 345.4px; top: 119px; --w: 41.5px; display: inline-block; transform-origin: 0px 0px; transform: scaleX(1.02);">Add-ins</span>
<!-- Controls -->
<svg class="a" style="left:412px;top:70px" width="32" height="30">
 <path d="M12.5 1.5h8v3h-8z" fill="none" stroke="#222"></path><rect x="1.5" y="4.5" width="28" height="16" fill="#fff" stroke="#222"></rect><path d="M1.5 10.5h28" stroke="#222"></path><rect x="13" y="9" width="4" height="4" fill="#fff" stroke="#222"></rect>
 <path d="M21 10a3 3 0 1 0 4 0v5h-4z M22 15v12h2v-12" fill="#2b79d0"></path><path d="M27 9h2v6h-2z M27.3 15h1.4v12h-1.4z" fill="#2b79d0"></path>
</svg>
<span class="t rb f" style="left: 412.3px; top: 103px; --w: 28.7px; display: inline-block; transform-origin: 0px 0px; transform: scaleX(0.9562);">Insert</span>
<svg class="a" style="left:422px;top:121px" width="9" height="6" fill="none" stroke="#333"><path d="M1 1l3.5 3.5 3.5-3.5"></path></svg>
<svg class="a" style="left:453px;top:66px" width="32" height="32" fill="none" stroke="#222" stroke-width="1.1">
 <path d="M1.5 1.5l28 28h-28z" fill="#fff"></path><path d="M7.5 15.5l8 8h-8z"></path>
 <path d="M18.5 1.5h11v28" fill="#fff"></path><path d="M24 5h5 M26 9h3 M24 13h5 M26 17h3 M24 21h5"></path>
</svg>
<span class="t rb f" style="left: 451.3px; top: 103px; --w: 35px; display: inline-block; transform-origin: 0px 0px; transform: scaleX(0.9368);">Design</span>
<span class="t rb f" style="left: 453.3px; top: 119px; --w: 31px; display: inline-block; transform-origin: 0px 0px; transform: scaleX(1.0323);">Mode</span>
<svg class="a" style="left:492px;top:66px" width="18" height="64" fill="none" stroke="#222">
 <rect x="3.5" y="1.5" width="11" height="15" fill="#fff"></rect><path d="M6 5.5h2 M6 9.5h2 M6 13.5h2 M10 5.5h2 M10 9.5h2"></path>
 <rect x="1.5" y="25.5" width="14" height="12" fill="#fff"></rect><path d="M1.5 28.5h14"></path><circle cx="9" cy="34" r="3" stroke="#2b79d0"></circle><path d="M11 36l4 4" stroke="#2b79d0" stroke-width="1.5"></path>
 <rect x="1.5" y="49.5" width="13" height="13" fill="#fff"></rect><path d="M1.5 52.5h13 M4 55.5h8 M4 58.5h8"></path><path d="M16.5 49v13" stroke="#d0211c" stroke-width="2"></path>
</svg>
<span class="t rb f" style="left: 512px; top: 70px; --w: 52.7px; display: inline-block; transform-origin: 0px 0px; transform: scaleX(0.9634);">Properties</span>
<span class="t rb f" style="left: 512px; top: 93.5px; --w: 56px; display: inline-block; transform-origin: 0px 0px; transform: scaleX(0.9684);">View Code</span>
<span class="t rb f" style="left: 512px; top: 118px; --w: 57.5px; display: inline-block; transform-origin: 0px 0px; transform: scaleX(0.9684);">Run Dialog</span>
<!-- XML -->
<svg class="a" style="left:598px;top:66px" width="32" height="32" fill="none">
 <rect x="2.5" y="1.5" width="27" height="28" fill="#eef4fa" stroke="#222"></rect><path d="M2.5 4.5h27" stroke="#555" stroke-width="2"></path>
 <rect x="9.5" y="9.5" width="14" height="6" stroke="#2b79d0"></rect><rect x="9.5" y="19.5" width="14" height="6" stroke="#2b79d0"></rect><path d="M6.5 7v16h3 M6.5 12.5h3" stroke="#2b79d0"></path>
</svg>
<span class="t rb f" style="left: 596px; top: 103px; --w: 36px; display: inline-block; transform-origin: 0px 0px; transform: scaleX(0.9466);">Source</span>
<svg class="a" style="left:637px;top:66px" width="18" height="64" fill="none" stroke-width="1">
 <rect x="1.5" y="1.5" width="14" height="14" stroke="#9a9a9a"></rect><path d="M1.5 5h14 M1.5 8.5h14 M1.5 12h14 M5.5 1.5v14" stroke="#9a9a9a"></path><rect x="8.5" y="8.5" width="6" height="6" fill="#c1bdba" stroke="#9a9a9a"></rect>
 <path d="M4.5 24.5h7l3 3v2" stroke="#222"></path><path d="M4.5 24.5v2" stroke="#222"></path><rect x="1.5" y="28.5" width="15" height="7" rx="1" fill="#fff" stroke="#222"></rect>
 <path d="M5 30.5l-2 1.5 2 1.5 M13 30.5l2 1.5-2 1.5" stroke="#222"></path><circle cx="9" cy="32" r="1.6" stroke="#222"></circle><path d="M3.5 37.5h11" stroke="#222"></path>
 <path d="M2.5 21v6 M-0.5 24h6" stroke="#1a8a2a"></path>
 <path d="M4.5 47.5h7l3 3v2 M4.5 47.5v2" stroke="#9a9a9a"></path><rect x="1.5" y="51.5" width="15" height="7" rx="1" stroke="#9a9a9a"></rect>
 <path d="M5 53.5l-2 1.5 2 1.5 M13 53.5l2 1.5-2 1.5" stroke="#9a9a9a"></path><circle cx="9" cy="55" r="1.6" stroke="#9a9a9a"></circle><path d="M3.5 60.5h11" stroke="#9a9a9a"></path>
</svg>
<span class="t rb f" style="left: 657px; top: 69px; --w: 79.6px; color: rgb(132, 132, 132); display: inline-block; transform-origin: 0px 0px; transform: scaleX(0.9782);">Map Properties</span>
<span class="t rb f" style="left: 657px; top: 91.5px; --w: 86.7px; display: inline-block; transform-origin: 0px 0px; transform: scaleX(0.9418);">Expansion Packs</span>
<span class="t rb f" style="left: 657px; top: 114px; --w: 65.8px; color: rgb(132, 132, 132); display: inline-block; transform-origin: 0px 0px; transform: scaleX(0.9307);">Refresh Data</span>
<svg class="a" style="left:752px;top:66px" width="20" height="42" fill="none" stroke-width="1">
 <path d="M5.5 1.5h7l3 3v2 M5.5 1.5v2" stroke="#222"></path><rect x="1.5" y="5.5" width="16" height="7" rx="1" fill="#fff" stroke="#222"></rect>
 <path d="M5 7.5l-2 1.5 2 1.5 M14 7.5l2 1.5-2 1.5" stroke="#222"></path><circle cx="9.5" cy="9" r="1.6" stroke="#222"></circle>
 <path d="M17 15h-10 M9.5 12.5l-2.5 2.5 2.5 2.5" stroke="#2b72d0" stroke-width="1.5"></path><path d="M3.5 14.5v1" stroke="#222"></path>
 <path d="M5.5 24.5h7l3 3v2 M5.5 24.5v2" stroke="#9a9a9a"></path><rect x="1.5" y="28.5" width="16" height="7" rx="1" stroke="#9a9a9a"></rect>
 <path d="M5 30.5l-2 1.5 2 1.5 M14 30.5l2 1.5-2 1.5" stroke="#9a9a9a"></path><circle cx="9.5" cy="32" r="1.6" stroke="#9a9a9a"></circle>
 <path d="M7 38h10 M14.5 35.5l2.5 2.5-2.5 2.5" stroke="#a8a8a8" stroke-width="1.5"></path>
</svg>
<span class="t rb f" style="left: 773px; top: 69px; --w: 35.5px; display: inline-block; transform-origin: 0px 0px; transform: scaleX(1.0436);">Import</span>
<span class="t rb f" style="left: 773px; top: 91.5px; --w: 33.7px; color: rgb(132, 132, 132); display: inline-block; transform-origin: 0px 0px; transform: scaleX(0.9715);">Export</span>

<div class="a" style="left:211px;top:128px;width:1690px;height:757px;background:#f0f0f0;border:1px solid #6d6d6d;box-shadow:0 2px 12px 1px rgba(0,0,0,0.32)"></div>
<div class="a" style="left:212px;top:129px;width:1688px;height:30px;background:#fff"></div>
<div class="a" style="left:212px;top:159px;width:1688px;height:51px;background:#f9f9f9"></div>
<svg class="a" style="left:219px;top:134px" width="18" height="18">
<rect x="3.5" y="4.5" width="13" height="12" fill="#fff" stroke="#111"></rect><rect x="4" y="5" width="12" height="3" fill="#2fc8f0"></rect><path d="M3.5 8.5h13" stroke="#111"></path>
<path d="M7 11.5h1 M10 11.5h1 M13 11.5h1 M7 14h1 M10 14h1 M13 14h1" stroke="#777"></path>
<path d="M6 1.5q3-1.5 5 .5l-1 2.5q-3 0-4-3z" fill="#e0201c" stroke="#600" stroke-width=".6"></path>
<path d="M1 9q3-3 6-2l-1 3q-3 1-5-1z" fill="#e6d400" stroke="#333" stroke-width=".6"></path>
</svg>
<span class="t f" style="left: 241px; top: 138px; font-size: 12px; color: rgb(0, 0, 0); --w: 365px; display: inline-block; transform-origin: 0px 0px; transform: scaleX(0.9807);">Microsoft Visual Basic for Applications - [ClearPVreport0_or_8 (Code)]</span>
<svg class="a" style="left:1775px;top:132px" width="115" height="22" fill="none" stroke="#111" stroke-width="1">
<path d="M6 11.5h10"></path><path d="M51.5 6.5h10v10h-10z"></path><path d="M97 6l10.5 10.5 M107.5 6l-10.5 10.5"></path></svg>
<svg class="a" style="left:1845px;top:190px" width="52" height="16">
<rect x="4" y="10" width="7" height="3" fill="#111"></rect>
<path d="M20.5 7.5h5.5v5h-5.5z M23 7.5v-3h5.5v5h-2.5" fill="none" stroke="#111" stroke-width="1.2"></path><path d="M20 7.5h6.5 M22.5 4.5h6.5" stroke="#111" stroke-width="2"></path>
<path d="M40 4l7 7 M47 4l-7 7" stroke="#111" stroke-width="2"></path></svg>
<div class="a" style="left:683px;top:162px;width:184px;height:22px;background:#ededed"></div>
<div class="a" style="left:866px;top:160px;width:12px;height:25px;background:linear-gradient(90deg,#b8b8b8,#9c9c9c);border-radius:0 3px 3px 0"></div>
<svg class="a" style="left:867px;top:173px" width="10" height="10"><path d="M2 1.5h6" stroke="#111" stroke-width="1.4"></path><path d="M1.5 4h7l-3.5 4z" fill="#111"></path></svg>
<svg class="a" style="left:215px;top:160px" width="470" height="26">
<defs>
<linearGradient id="gb" x1="0" y1="0" x2="1" y2="1"><stop offset="0" stop-color="#a8b8f8"></stop><stop offset="1" stop-color="#2a3aa8"></stop></linearGradient>
<linearGradient id="gb2" x1="0" y1="0" x2="1" y2="1"><stop offset="0" stop-color="#c8d8ff"></stop><stop offset="1" stop-color="#2040b0"></stop></linearGradient>
<linearGradient id="gy" x1="0" y1="0" x2="1" y2="1"><stop offset="0" stop-color="#fff0a0"></stop><stop offset="1" stop-color="#d0a020"></stop></linearGradient>
<linearGradient id="gg" x1="0" y1="0" x2="1" y2="1"><stop offset="0" stop-color="#f4f4f4"></stop><stop offset="1" stop-color="#bcbcbc"></stop></linearGradient>
</defs>
<g fill="#9a9a9a"><rect x="3" y="4" width="2" height="2"></rect><rect x="3" y="8" width="2" height="2"></rect><rect x="3" y="12" width="2" height="2"></rect><rect x="3" y="16" width="2" height="2"></rect></g>
<rect x="11" y="5" width="14" height="14" fill="#fff" stroke="#1a8a1a" stroke-width="2" stroke-dasharray="1 .6"></rect>
<path d="M14 8l8 8 M22 8l-8 8" stroke="#1a8a1a" stroke-width="3.2"></path><path d="M14.5 8.5l7 7" stroke="#bfe8bf" stroke-width=".7"></path>
<rect x="34.5" y="5.5" width="13" height="13" fill="#f2f2f2" stroke="#3a3a3a"></rect><rect x="34.5" y="5.5" width="13" height="2" fill="#3a3a3a"></rect>
<path d="M36.5 9.5h2.5 M36.5 12.5h2.5" stroke="#222"></path><rect x="41" y="9" width="5" height="2" fill="#e08a18"></rect><rect x="41.5" y="12.5" width="4" height="2.5" fill="none" stroke="#e08a18"></rect><path d="M41 17h2 M44 17h2" stroke="#e08a18"></path>
<path d="M55 10.5h5l-2.5 3z" fill="#111"></path>
<path d="M68 5h13.5l.5.5v13.5h-13.5l-.5-.5z" fill="url(#gb)"></path><rect x="71" y="5.5" width="8" height="5.5" fill="#f4f6ff"></rect><rect x="72" y="14" width="6" height="5" fill="#222"></rect><rect x="74" y="15" width="2.5" height="3" fill="#e8e8e8"></rect>
<path d="M89.5 4v14" stroke="#b4b4b4"></path>
<g stroke="#bdbdbd" fill="none" stroke-width="1.3"><path d="M101 4l5 9 M107 4l-5 9"></path><circle cx="101.3" cy="15.3" r="2.2"></circle><circle cx="106.8" cy="15.3" r="2.2"></circle></g>
<path d="M119.5 5.5h5l1.5 1.5v8.5h-6.5z" fill="url(#gg)" stroke="#b8b8b8"></path><path d="M125.5 9.5h5.5l2 2v6.5h-7.5z" fill="url(#gg)" stroke="#b8b8b8"></path><path d="M121 8.5h3 M121 11h3 M127 13h4 M127 15.5h4" stroke="#c8c8c8"></path>
<path d="M142.5 7.5h9.5v10.5h-9.5z" fill="url(#gg)" stroke="#b8b8b8"></path><path d="M145 6.5h4.5v2h-4.5z" fill="#e0e0e0" stroke="#b0b0b0"></path><path d="M149.5 12.5h6l1.5 1.5v4.5h-7.5z" fill="#eee" stroke="#b8b8b8"></path>
<path d="M166 10h4v8h-4z M174 10h4v8h-4z M167 6h2v4h-2z M175 6h2v4h-2z M170 12h4v2h-4z" fill="url(#gg)" stroke="#b8b8b8" stroke-width=".8"></path>
<path d="M187.5 4v14" stroke="#b4b4b4"></path>
<path d="M197 7h5 M197 7v5" stroke="#c0c0c0" stroke-width="2.2" fill="none"></path><path d="M197.5 7.5q8-3 9.5 3q1 4-2.5 7.5" stroke="#c0c0c0" stroke-width="2.4" fill="none"></path>
<path d="M229 7h-5 M229 7v5" stroke="#c0c0c0" stroke-width="2.2" fill="none"></path><path d="M228.5 7.5q-8-3-9.5 3q-1 4 2.5 7.5" stroke="#c0c0c0" stroke-width="2.4" fill="none"></path>
<path d="M239.5 4v14" stroke="#b4b4b4"></path>
<path d="M251 7.5v9.5l5-4.7z" fill="#1aa01a" stroke="#0a700a" stroke-width=".5"></path>
<rect x="273" y="8" width="2.6" height="9" fill="url(#gb2)" stroke="#1a3a9a" stroke-width=".6"></rect><rect x="277.4" y="8" width="2.6" height="9" fill="url(#gb2)" stroke="#1a3a9a" stroke-width=".6"></rect>
<rect x="295" y="8" width="9" height="9" fill="url(#gb2)" stroke="#1a3a9a" stroke-width=".6"></rect>
<path d="M315.5 4.5v10h9z" fill="#5a7ae0" stroke="#2a3ab0"></path><path d="M318 10v2.5h2.5z" fill="#fff"></path>
<path d="M321 13l7-8 2 2-7 8-2.5.5z" fill="#f0d060" stroke="#806010" stroke-width=".6"></path><circle cx="329.5" cy="5.5" r="1.3" fill="#e07060"></circle>
<rect x="315.5" y="15" width="15" height="3.5" fill="#f0b030" stroke="#806010" stroke-width=".6"></rect>
<path d="M337.5 4v14" stroke="#b4b4b4"></path>
<path d="M344 13l9 5 6-3-9-5z" fill="#e8f0ff" stroke="#1a2a7a" stroke-width=".8"></path><path d="M346 5l8 5v3l-8-5z" fill="#9ab8f0" stroke="#1a2a7a" stroke-width=".8"></path><path d="M348 8l6 4" stroke="#fff"></path>
<path d="M359 3l1.5 2-1.5 2-1.5-2z M359 15l1.5 2-1.5 2-1.5-2z" fill="#f0b020"></path><circle cx="358" cy="11" r="1.8" fill="#e04a3a"></circle><path d="M356 12h4" stroke="#3a7ae0" stroke-width="2"></path>
<rect x="367.5" y="10.5" width="12" height="8" fill="#dde8f6" stroke="#2a4a8a"></rect><path d="M370 14h2 M373 14h5 M370 16.5h2 M373 16.5h5" stroke="#8aa0c0"></path>
<path d="M371 9l5-4h5l1.5 2-7 5z" fill="url(#gy)" stroke="#806010" stroke-width=".6"></path><path d="M381 5l2 1v6l-2-1z" fill="#30a040"></path>
<circle cx="392" cy="6" r="2" fill="#3a3ae0" stroke="#111" stroke-width=".4"></circle><path d="M399 6l-3 2 3 2z" fill="#2aa02a"></path><rect x="402.5" y="4" width="3" height="3" fill="#e02020" stroke="#600" stroke-width=".4"></rect>
<path d="M393.5 11.5l3-2h7l1 1v6l-2 2h-8.5v-7z" fill="url(#gy)" stroke="#806010" stroke-width=".7"></path><path d="M393 11l2-2 M404 10l1.5-1.5" stroke="#c09020"></path>
<g stroke="#c4c4c4" fill="none" stroke-width="1.5"><path d="M417 17l9-9 M418 6q3-2 5 1 l-1 2 M426 6l-9 9 M425 5l3 3"></path></g>
<path d="M435.5 4v14" stroke="#b4b4b4"></path>
<circle cx="450" cy="12" r="7.8" fill="#3c78d0" stroke="#2a5aa8" stroke-width=".6"></circle><text x="446.2" y="16.6" font-family="Liberation Sans" font-weight="bold" font-size="11.5" fill="#fff">?</text>
<path d="M464.5 4v14" stroke="#b4b4b4"></path>
</svg>
<svg class="a" style="left:215px;top:186px" width="28" height="24">
<g fill="#9a9a9a"><rect x="3" y="4" width="2" height="2"></rect><rect x="3" y="8" width="2" height="2"></rect><rect x="3" y="12" width="2" height="2"></rect><rect x="3" y="16" width="2" height="2"></rect></g>
<path d="M10 13l6-6 M14 8l9 9 M22 7l-8 8" stroke="#111" fill="none" stroke-width="1.2"></path>
<ellipse cx="16" cy="6" rx="1.6" ry="3" transform="rotate(15 16 6)" fill="#ffff00" stroke="#111" stroke-width=".9"></ellipse>
<ellipse cx="21.5" cy="6.5" rx="1.6" ry="3" transform="rotate(-15 21.5 6.5)" fill="#ff00ff" stroke="#111" stroke-width=".9"></ellipse>
<ellipse cx="10" cy="14" rx="1.6" ry="3" transform="rotate(-50 10 14)" fill="#ff00ff" stroke="#111" stroke-width=".9"></ellipse>
<ellipse cx="16.5" cy="12.5" rx="2.8" ry="1.6" fill="#00ff00" stroke="#111" stroke-width=".9"></ellipse>
<ellipse cx="21" cy="14.5" rx="2.8" ry="1.6" fill="#00ffff" stroke="#111" stroke-width=".9"></ellipse>
<ellipse cx="17.5" cy="19" rx="1.6" ry="2.6" transform="rotate(20 17.5 19)" fill="#ffff00" stroke="#111" stroke-width=".9"></ellipse>
</svg>
<span class="t f menu" style="left: 249px; top: 192px; font-size: 12px; color: rgb(0, 0, 0); --w: 17.5px; display: inline-block; transform-origin: 0px 0px; transform: scaleX(0.904);"><u>F</u>ile</span>
<span class="t f menu" style="left: 283.4px; top: 192px; font-size: 12px; color: rgb(0, 0, 0); --w: 20px; display: inline-block; transform-origin: 0px 0px; transform: scaleX(0.966);"><u>E</u>dit</span>
<span class="t f menu" style="left: 319px; top: 192px; font-size: 12px; color: rgb(0, 0, 0); --w: 24.5px; display: inline-block; transform-origin: 0px 0px; transform: scaleX(0.9492);"><u>V</u>iew</span>
<span class="t f menu" style="left: 360px; top: 192px; font-size: 12px; color: rgb(0, 0, 0); --w: 29px; display: inline-block; transform-origin: 0px 0px; transform: scaleX(0.9657);"><u>I</u>nsert</span>
<span class="t f menu" style="left: 405.5px; top: 192px; font-size: 12px; color: rgb(0, 0, 0); --w: 36px; display: inline-block; transform-origin: 0px 0px; transform: scaleX(0.9466);">F<u>o</u>rmat</span>
<span class="t f menu" style="left: 459.3px; top: 192px; font-size: 12px; color: rgb(0, 0, 0); --w: 35px; display: inline-block; transform-origin: 0px 0px; transform: scaleX(0.9894);"><u>D</u>ebug</span>
<span class="t f menu" style="left: 510px; top: 192px; font-size: 12px; color: rgb(0, 0, 0); --w: 21px; display: inline-block; transform-origin: 0px 0px; transform: scaleX(0.9532);"><u>R</u>un</span>
<span class="t f menu" style="left: 546.8px; top: 192px; font-size: 12px; color: rgb(0, 0, 0); --w: 29px; display: inline-block; transform-origin: 0px 0px; transform: scaleX(1.0351);"><u>T</u>ools</span>
<span class="t f menu" style="left: 591px; top: 192px; font-size: 12px; color: rgb(0, 0, 0); --w: 43px; display: inline-block; transform-origin: 0px 0px; transform: scaleX(1.0393);"><u>A</u>dd-Ins</span>
<span class="t f menu" style="left: 649.2px; top: 192px; font-size: 12px; color: rgb(0, 0, 0); --w: 42px; display: inline-block; transform-origin: 0px 0px; transform: scaleX(0.9839);"><u>W</u>indow</span>
<span class="t f menu" style="left: 709.2px; top: 192px; font-size: 12px; color: rgb(0, 0, 0); --w: 24px; display: inline-block; transform-origin: 0px 0px; transform: scaleX(0.9722);"><u>H</u>elp</span>
<div class="a" style="left:212px;top:210px;width:357px;height:22px;background:#99b4d1"></div>
<span class="t f" style="left: 213.5px; top: 212px; font-size: 12px; color: rgb(0, 0, 0); --w: 106.5px; display: inline-block; transform-origin: 0px 0px; transform: scaleX(0.9737);">Project - VBAProject</span>
<div class="a btn3d" style="left:548px;top:211px;width:20px;height:20px"></div>
<svg class="a" style="left:551px;top:214px" width="14" height="14"><path d="M2.5 2.5l9 9 M11.5 2.5l-9 9" stroke="#000" stroke-width="1.8"></path></svg>
<div class="a" style="left:212px;top:232px;width:357px;height:27px;background:linear-gradient(#fff,#ececec)"></div>
<div class="a" style="left:556px;top:234px;width:13px;height:25px;background:linear-gradient(90deg,#c4c4c4,#a4a4a4);border-radius:4px 0 0 4px"></div>
<svg class="a" style="left:558px;top:246px" width="10" height="10"><path d="M2 1.5h6" stroke="#111" stroke-width="1.4"></path><path d="M1.5 4h7l-3.5 4z" fill="#111"></path></svg>
<div class="a" style="left:269px;top:235px;width:21px;height:21px;background:#d9e6f3;border:1px solid #3d7fd0"></div>
<svg class="a" style="left:218px;top:236px" width="76" height="20">
<g fill="#f4f4f4" stroke="#b4b4b4"><rect x="3.5" y="4.5" width="13" height="11"></rect><rect x="25.5" y="4.5" width="13" height="11"></rect></g>
<g stroke="#c4c4c4"><path d="M6 8h8 M6 11h8 M6 13.5h8 M28 8h4 M34 8h3 M28 12h4 M34 12h3"></path></g>
<path d="M47.5 3v15" stroke="#c8c8c8"></path>
<path d="M55.5 6.5h5l1.5 1.5h7.5v9h-14z" fill="#e8b84a" stroke="#8a6a20"></path><path d="M56 10h13v7h-13z" fill="#f6d36a"></path>
</svg>
<div class="a" style="left:212px;top:259px;width:357px;height:2px;background:#a0a0a0"></div>
<div class="a" style="left:212px;top:261px;width:356px;height:306px;background:#fff;border-right:1px solid #a0a0a0;border-bottom:1px solid #dcdcdc"></div>
<div class="a" style="left:212px;top:573px;width:357px;height:22px;background:#bfcddb"></div>
<span class="t f" style="left: 213px; top: 575px; font-size: 12px; color: rgb(0, 0, 0); --w: 52.6px; display: inline-block; transform-origin: 0px 0px; transform: scaleX(0.9616);">Properties</span>
<div class="a btn3d" style="left:548px;top:574px;width:20px;height:20px"></div>
<svg class="a" style="left:551px;top:577px" width="14" height="14"><path d="M2.5 2.5l9 9 M11.5 2.5l-9 9" stroke="#000" stroke-width="1.8"></path></svg>
<div class="a" style="left:212px;top:599px;width:355px;height:20px;background:#fff;border:1px solid #7a7a7a"></div>
<svg class="a" style="left:552px;top:604px" width="12" height="10"><path d="M1.5 3l4.5 4.5 4.5-4.5" fill="none" stroke="#444"></path></svg>
<div class="a" style="left:215px;top:620px;width:63px;height:22px;background:#fff;border:1px solid #d9d9d9;border-bottom:none"></div>
<div class="a" style="left:278px;top:622px;width:65px;height:19px;background:#f0f0f0;border:1px solid #d9d9d9;border-bottom:none"></div>
<span class="t f" style="left: 219.6px; top: 624px; font-size: 12px; color: rgb(0, 0, 0); --w: 50.4px; display: inline-block; transform-origin: 0px 0px; transform: scaleX(0.8992);">Alphabetic</span>
<span class="t f" style="left: 281.5px; top: 626px; font-size: 12px; color: rgb(0, 0, 0); --w: 57.5px; display: inline-block; transform-origin: 0px 0px; transform: scaleX(0.8885);">Categorized</span>
<div class="a" style="left:215px;top:642px;width:351px;height:239px;background:#fff;border:1px solid #a0a0a0;box-shadow:inset 0 0 0 2px #fff,inset 0 0 0 3px #a0a0a0"></div>
<div class="a" style="left:245.0px;top:310.0px;width:77.0px;height:16.0px;background:#ffff00;border-radius:40% 20% 30% 50%/60% 30% 40% 60%;"></div>
<div class="a" style="left:357.7px;top:342.0px;width:45.1px;height:17.0px;background:#ffff00;border-radius:1px;"></div>
<div class="a" style="left:398.0px;top:357.5px;width:7.8px;height:14.5px;background:#ffff00;border-radius:1px;"></div>
<div class="a" style="left:371.3px;top:372.0px;width:7.7px;height:16.0px;background:#ffff00;border-radius:1px;"></div>
<div class="a" style="left:375.4px;top:388.0px;width:13.6px;height:20.0px;background:#ffff00;border-radius:1px;"></div>
<div class="a" style="left:396.0px;top:406.8px;width:5.4px;height:12.2px;background:#ffff00;border-radius:1px;"></div>
<div class="a" style="left:391.8px;top:423.0px;width:9.1px;height:13.0px;background:#ffff00;border-radius:1px;"></div>
<div class="a" style="left:359.8px;top:433.0px;width:4.7px;height:19.0px;background:#ffff00;border-radius:1px;"></div>
<div class="a" style="left:436.4px;top:452.0px;width:6.6px;height:18.0px;background:#ffff00;border-radius:1px;"></div>
<div class="a" style="left:297.0px;top:472.4px;width:101.0px;height:16.4px;background:#ffff00;border-radius:40% 20% 30% 50%/60% 30% 40% 60%;"></div>
<svg class="a" style="left:244px;top:304px" width="84" height="26"><path d="M2 22 Q6 12 20 8 L75 7 Q82 8 80 18 L78 24 Q40 26 2 22z" fill="#ffff00"></path></svg>
<div class="a" style="left:225px;top:276px;width:1px;height:8px;background:repeating-linear-gradient(#808080 0 1px,transparent 1px 2px)"></div>
<svg class="a" style="left:221px;top:267px" width="9" height="9"><rect x="0.5" y="0.5" width="8" height="8" fill="#fff" stroke="#9a9a9a"></rect><path d="M2 4.5h5" stroke="#1a3a8a"></path><path d="M4.5 2v5" stroke="#1a3a8a"></path></svg>
<div class="a" style="left:230px;top:271px;width:6px;height:1px;background:repeating-linear-gradient(90deg,#808080 0 1px,transparent 1px 2px)"></div>
<svg class="a" style="left:235px;top:263px" width="18" height="17">
<path d="M1 12.5q4 3 8 3.5q4-1 7-3l-2-2" fill="#fff" stroke="#111" stroke-width="1.2"></path>
<path d="M2.5 2.5l5 1.5v9l-5-2z" fill="#fff" stroke="#111" stroke-width="1.2"></path><path d="M4 4l3 1 M4 7l3 1" stroke="#00e0f0" stroke-width="1.3"></path>
<path d="M7.5 5l5 3v6l-5-1.5z" fill="#fff" stroke="#111" stroke-width="1.1"></path><path d="M9 9l3 3" stroke="#00e0f0" stroke-width="1.3"></path>
<path d="M11 5.5l3-3" stroke="#111"></path><ellipse cx="10.5" cy="5" rx="1.6" ry="1" fill="#ffff00" stroke="#111" stroke-width=".6"></ellipse><ellipse cx="15" cy="1.8" rx="1.6" ry="1" fill="#00ff00" stroke="#111" stroke-width=".6"></ellipse>
<ellipse cx="13.5" cy="8" rx="1" ry="1.8" fill="#ff00ff" stroke="#111" stroke-width=".6"></ellipse>
</svg>
<span class="t f" style="left: 257.5px; top: 266px; font-size: 11px; font-weight: bold; color: rgb(0, 0, 0); --w: 161.8px; display: inline-block; transform-origin: 0px 0px; transform: scaleX(0.9841);">VBAProject (PERSONAL.XLSB)</span>
<svg class="a" style="left:221px;top:283px" width="9" height="9"><rect x="0.5" y="0.5" width="8" height="8" fill="#fff" stroke="#9a9a9a"></rect><path d="M2 4.5h5" stroke="#1a3a8a"></path></svg>
<div class="a" style="left:230px;top:287px;width:6px;height:1px;background:repeating-linear-gradient(90deg,#808080 0 1px,transparent 1px 2px)"></div>
<svg class="a" style="left:235px;top:279px" width="18" height="17">
<path d="M1 12.5q4 3 8 3.5q4-1 7-3l-2-2" fill="#fff" stroke="#111" stroke-width="1.2"></path>
<path d="M2.5 2.5l5 1.5v9l-5-2z" fill="#fff" stroke="#111" stroke-width="1.2"></path><path d="M4 4l3 1 M4 7l3 1" stroke="#00e0f0" stroke-width="1.3"></path>
<path d="M7.5 5l5 3v6l-5-1.5z" fill="#fff" stroke="#111" stroke-width="1.1"></path><path d="M9 9l3 3" stroke="#00e0f0" stroke-width="1.3"></path>
<path d="M11 5.5l3-3" stroke="#111"></path><ellipse cx="10.5" cy="5" rx="1.6" ry="1" fill="#ffff00" stroke="#111" stroke-width=".6"></ellipse><ellipse cx="15" cy="1.8" rx="1.6" ry="1" fill="#00ff00" stroke="#111" stroke-width=".6"></ellipse>
<ellipse cx="13.5" cy="8" rx="1" ry="1.8" fill="#ff00ff" stroke="#111" stroke-width=".6"></ellipse>
</svg>
<span class="t f" style="left: 257.5px; top: 282px; font-size: 11px; font-weight: bold; color: rgb(0, 0, 0); --w: 226.2px; display: inline-block; transform-origin: 0px 0px; transform: scaleX(1.0093);">VBAProject (PV REPORT TEMPLATE.xlsm)</span>
<div class="a" style="left:244px;top:294px;width:1px;height:22px;background:repeating-linear-gradient(#808080 0 1px,transparent 1px 2px)"></div>
<svg class="a" style="left:240px;top:299px" width="9" height="9"><rect x="0.5" y="0.5" width="8" height="8" fill="#fff" stroke="#9a9a9a"></rect><path d="M2 4.5h5" stroke="#1a3a8a"></path><path d="M4.5 2v5" stroke="#1a3a8a"></path></svg>
<div class="a" style="left:249px;top:303px;width:7px;height:1px;background:repeating-linear-gradient(90deg,#808080 0 1px,transparent 1px 2px)"></div>
<svg class="a" style="left:256px;top:296px" width="16" height="14"><path d="M0.5 2.5h5l1.5 1.5h8.5v9h-15z" fill="#ecec9c" stroke="#8a8a6a"></path><path d="M1 5h15v8h-15z" fill="#f0f0a8" stroke="#a0a070" stroke-width=".5"></path></svg>
<div class="a" style="left:274px;top:295px;width:116px;height:16px;background:#0078d7"></div>
<svg class="a" style="left:274px;top:305px" width="80" height="6"><path d="M0 6 L0 3 Q20 0 60 1 Q75 2 80 6z" fill="#1a7a2a"></path></svg>
<span class="t f" style="left: 275px; top: 298px; font-size: 11px; color: rgb(255, 255, 255); --w: 112.8px; display: inline-block; transform-origin: 0px 0px; transform: scaleX(0.9815);">Microsoft Excel Objects</span>
<svg class="a" style="left:240px;top:315px" width="9" height="9"><rect x="0.5" y="0.5" width="8" height="8" fill="#fff" stroke="#9a9a9a"></rect><path d="M2 4.5h5" stroke="#1a3a8a"></path></svg>
<div class="a" style="left:249px;top:319px;width:7px;height:1px;background:repeating-linear-gradient(90deg,#808080 0 1px,transparent 1px 2px)"></div>
<svg class="a" style="left:256px;top:312px" width="17" height="14"><path d="M0.5 2.5h5l1.5 1.5h7.5v9h-14z" fill="#ecec9c" stroke="#8a8a6a"></path><path d="M3.5 6.5h13l-3 7h-13z" fill="#f0f0a8" stroke="#8a8a6a"></path><path d="M14 7v6" stroke="#111" stroke-width="1.3"></path></svg>
<span class="t f" style="left: 275.3px; top: 314px; font-size: 11px; color: rgb(0, 0, 0); --w: 39px; display: inline-block; transform-origin: 0px 0px; transform: scaleX(0.938);">Modules</span>
<div class="a" style="left:263px;top:325px;width:1px;height:155px;background:repeating-linear-gradient(#808080 0 1px,transparent 1px 2px)"></div>
<div class="a" style="left:264px;top:335px;width:10px;height:1px;background:repeating-linear-gradient(90deg,#808080 0 1px,transparent 1px 2px)"></div>
<svg class="a" style="left:273px;top:327.5px" width="18" height="15">
<path d="M4 10l6-6 M8.5 5l8 8 M15.5 4l-6.5 6.5" stroke="#111" fill="none" stroke-width="1" stroke-dasharray="1 .7"></path>
<ellipse cx="10" cy="4" rx="1.4" ry="2.8" transform="rotate(15 10 4)" fill="#ffff00" stroke="#111" stroke-width=".9"></ellipse>
<ellipse cx="14.3" cy="4.5" rx="1.4" ry="2.8" transform="rotate(-15 14.3 4.5)" fill="#ff00ff" stroke="#111" stroke-width=".9"></ellipse>
<ellipse cx="4" cy="10.5" rx="1.4" ry="2.8" transform="rotate(-15 4 10.5)" fill="#ff00ff" stroke="#111" stroke-width=".9"></ellipse>
<ellipse cx="9.5" cy="11" rx="2.6" ry="1.6" fill="#00ff00" stroke="#111" stroke-width=".9"></ellipse>
<ellipse cx="15" cy="13" rx="2.6" ry="1.5" fill="#00ffff" stroke="#111" stroke-width=".9"></ellipse>
</svg>
<span class="t f" style="left: 294.5px; top: 330px; font-size: 11px; color: rgb(0, 0, 0); --w: 98.5px; display: inline-block; transform-origin: 0px 0px; transform: scaleX(0.9822);">ApplyConditFormat4</span>
<div class="a" style="left:264px;top:351px;width:10px;height:1px;background:repeating-linear-gradient(90deg,#808080 0 1px,transparent 1px 2px)"></div>
<svg class="a" style="left:273px;top:343.5px" width="18" height="15">
<path d="M4 10l6-6 M8.5 5l8 8 M15.5 4l-6.5 6.5" stroke="#111" fill="none" stroke-width="1" stroke-dasharray="1 .7"></path>
<ellipse cx="10" cy="4" rx="1.4" ry="2.8" transform="rotate(15 10 4)" fill="#ffff00" stroke="#111" stroke-width=".9"></ellipse>
<ellipse cx="14.3" cy="4.5" rx="1.4" ry="2.8" transform="rotate(-15 14.3 4.5)" fill="#ff00ff" stroke="#111" stroke-width=".9"></ellipse>
<ellipse cx="4" cy="10.5" rx="1.4" ry="2.8" transform="rotate(-15 4 10.5)" fill="#ff00ff" stroke="#111" stroke-width=".9"></ellipse>
<ellipse cx="9.5" cy="11" rx="2.6" ry="1.6" fill="#00ff00" stroke="#111" stroke-width=".9"></ellipse>
<ellipse cx="15" cy="13" rx="2.6" ry="1.5" fill="#00ffff" stroke="#111" stroke-width=".9"></ellipse>
</svg>
<span class="t f" style="left: 294.5px; top: 346px; font-size: 11px; color: rgb(0, 0, 0); --w: 101px; display: inline-block; transform-origin: 0px 0px; transform: scaleX(0.9754);">ClearPVreport0_or_8</span>
<div class="a" style="left:264px;top:367px;width:10px;height:1px;background:repeating-linear-gradient(90deg,#808080 0 1px,transparent 1px 2px)"></div>
<svg class="a" style="left:273px;top:359.5px" width="18" height="15">
<path d="M4 10l6-6 M8.5 5l8 8 M15.5 4l-6.5 6.5" stroke="#111" fill="none" stroke-width="1" stroke-dasharray="1 .7"></path>
<ellipse cx="10" cy="4" rx="1.4" ry="2.8" transform="rotate(15 10 4)" fill="#ffff00" stroke="#111" stroke-width=".9"></ellipse>
<ellipse cx="14.3" cy="4.5" rx="1.4" ry="2.8" transform="rotate(-15 14.3 4.5)" fill="#ff00ff" stroke="#111" stroke-width=".9"></ellipse>
<ellipse cx="4" cy="10.5" rx="1.4" ry="2.8" transform="rotate(-15 4 10.5)" fill="#ff00ff" stroke="#111" stroke-width=".9"></ellipse>
<ellipse cx="9.5" cy="11" rx="2.6" ry="1.6" fill="#00ff00" stroke="#111" stroke-width=".9"></ellipse>
<ellipse cx="15" cy="13" rx="2.6" ry="1.5" fill="#00ffff" stroke="#111" stroke-width=".9"></ellipse>
</svg>
<span class="t f" style="left: 294.5px; top: 362px; font-size: 11px; color: rgb(0, 0, 0); --w: 109.4px; display: inline-block; transform-origin: 0px 0px; transform: scaleX(0.9742);">CreateFinalWorkbook7</span>
<div class="a" style="left:264px;top:383px;width:10px;height:1px;background:repeating-linear-gradient(90deg,#808080 0 1px,transparent 1px 2px)"></div>
<svg class="a" style="left:273px;top:375.5px" width="18" height="15">
<path d="M4 10l6-6 M8.5 5l8 8 M15.5 4l-6.5 6.5" stroke="#111" fill="none" stroke-width="1" stroke-dasharray="1 .7"></path>
<ellipse cx="10" cy="4" rx="1.4" ry="2.8" transform="rotate(15 10 4)" fill="#ffff00" stroke="#111" stroke-width=".9"></ellipse>
<ellipse cx="14.3" cy="4.5" rx="1.4" ry="2.8" transform="rotate(-15 14.3 4.5)" fill="#ff00ff" stroke="#111" stroke-width=".9"></ellipse>
<ellipse cx="4" cy="10.5" rx="1.4" ry="2.8" transform="rotate(-15 4 10.5)" fill="#ff00ff" stroke="#111" stroke-width=".9"></ellipse>
<ellipse cx="9.5" cy="11" rx="2.6" ry="1.6" fill="#00ff00" stroke="#111" stroke-width=".9"></ellipse>
<ellipse cx="15" cy="13" rx="2.6" ry="1.5" fill="#00ffff" stroke="#111" stroke-width=".9"></ellipse>
</svg>
<span class="t f" style="left: 294.5px; top: 378px; font-size: 11px; color: rgb(0, 0, 0); --w: 84.5px; display: inline-block; transform-origin: 0px 0px; transform: scaleX(0.9595);">CreatePVSheets1</span>
<div class="a" style="left:264px;top:399px;width:10px;height:1px;background:repeating-linear-gradient(90deg,#808080 0 1px,transparent 1px 2px)"></div>
<svg class="a" style="left:273px;top:391.5px" width="18" height="15">
<path d="M4 10l6-6 M8.5 5l8 8 M15.5 4l-6.5 6.5" stroke="#111" fill="none" stroke-width="1" stroke-dasharray="1 .7"></path>
<ellipse cx="10" cy="4" rx="1.4" ry="2.8" transform="rotate(15 10 4)" fill="#ffff00" stroke="#111" stroke-width=".9"></ellipse>
<ellipse cx="14.3" cy="4.5" rx="1.4" ry="2.8" transform="rotate(-15 14.3 4.5)" fill="#ff00ff" stroke="#111" stroke-width=".9"></ellipse>
<ellipse cx="4" cy="10.5" rx="1.4" ry="2.8" transform="rotate(-15 4 10.5)" fill="#ff00ff" stroke="#111" stroke-width=".9"></ellipse>
<ellipse cx="9.5" cy="11" rx="2.6" ry="1.6" fill="#00ff00" stroke="#111" stroke-width=".9"></ellipse>
<ellipse cx="15" cy="13" rx="2.6" ry="1.5" fill="#00ffff" stroke="#111" stroke-width=".9"></ellipse>
</svg>
<span class="t f" style="left: 294.5px; top: 394px; font-size: 11px; color: rgb(0, 0, 0); --w: 88px; display: inline-block; transform-origin: 0px 0px; transform: scaleX(0.9467);">DuplicatePVTable6</span>
<div class="a" style="left:264px;top:415px;width:10px;height:1px;background:repeating-linear-gradient(90deg,#808080 0 1px,transparent 1px 2px)"></div>
<svg class="a" style="left:273px;top:407.5px" width="18" height="15">
<path d="M4 10l6-6 M8.5 5l8 8 M15.5 4l-6.5 6.5" stroke="#111" fill="none" stroke-width="1" stroke-dasharray="1 .7"></path>
<ellipse cx="10" cy="4" rx="1.4" ry="2.8" transform="rotate(15 10 4)" fill="#ffff00" stroke="#111" stroke-width=".9"></ellipse>
<ellipse cx="14.3" cy="4.5" rx="1.4" ry="2.8" transform="rotate(-15 14.3 4.5)" fill="#ff00ff" stroke="#111" stroke-width=".9"></ellipse>
<ellipse cx="4" cy="10.5" rx="1.4" ry="2.8" transform="rotate(-15 4 10.5)" fill="#ff00ff" stroke="#111" stroke-width=".9"></ellipse>
<ellipse cx="9.5" cy="11" rx="2.6" ry="1.6" fill="#00ff00" stroke="#111" stroke-width=".9"></ellipse>
<ellipse cx="15" cy="13" rx="2.6" ry="1.5" fill="#00ffff" stroke="#111" stroke-width=".9"></ellipse>
</svg>
<span class="t f" style="left: 294.5px; top: 410px; font-size: 11px; color: rgb(0, 0, 0); --w: 106.4px; display: inline-block; transform-origin: 0px 0px; transform: scaleX(0.9257);">FilterMSASuppliersPV5</span>
<div class="a" style="left:264px;top:431px;width:10px;height:1px;background:repeating-linear-gradient(90deg,#808080 0 1px,transparent 1px 2px)"></div>
<svg class="a" style="left:273px;top:423.5px" width="18" height="15">
<path d="M4 10l6-6 M8.5 5l8 8 M15.5 4l-6.5 6.5" stroke="#111" fill="none" stroke-width="1" stroke-dasharray="1 .7"></path>
<ellipse cx="10" cy="4" rx="1.4" ry="2.8" transform="rotate(15 10 4)" fill="#ffff00" stroke="#111" stroke-width=".9"></ellipse>
<ellipse cx="14.3" cy="4.5" rx="1.4" ry="2.8" transform="rotate(-15 14.3 4.5)" fill="#ff00ff" stroke="#111" stroke-width=".9"></ellipse>
<ellipse cx="4" cy="10.5" rx="1.4" ry="2.8" transform="rotate(-15 4 10.5)" fill="#ff00ff" stroke="#111" stroke-width=".9"></ellipse>
<ellipse cx="9.5" cy="11" rx="2.6" ry="1.6" fill="#00ff00" stroke="#111" stroke-width=".9"></ellipse>
<ellipse cx="15" cy="13" rx="2.6" ry="1.5" fill="#00ffff" stroke="#111" stroke-width=".9"></ellipse>
</svg>
<span class="t f" style="left: 294.5px; top: 426px; font-size: 11px; color: rgb(0, 0, 0); --w: 104px; display: inline-block; transform-origin: 0px 0px; transform: scaleX(0.9832);">InitialFiltersandDups2</span>
<div class="a" style="left:264px;top:447px;width:10px;height:1px;background:repeating-linear-gradient(90deg,#808080 0 1px,transparent 1px 2px)"></div>
<svg class="a" style="left:273px;top:439.5px" width="18" height="15">
<path d="M4 10l6-6 M8.5 5l8 8 M15.5 4l-6.5 6.5" stroke="#111" fill="none" stroke-width="1" stroke-dasharray="1 .7"></path>
<ellipse cx="10" cy="4" rx="1.4" ry="2.8" transform="rotate(15 10 4)" fill="#ffff00" stroke="#111" stroke-width=".9"></ellipse>
<ellipse cx="14.3" cy="4.5" rx="1.4" ry="2.8" transform="rotate(-15 14.3 4.5)" fill="#ff00ff" stroke="#111" stroke-width=".9"></ellipse>
<ellipse cx="4" cy="10.5" rx="1.4" ry="2.8" transform="rotate(-15 4 10.5)" fill="#ff00ff" stroke="#111" stroke-width=".9"></ellipse>
<ellipse cx="9.5" cy="11" rx="2.6" ry="1.6" fill="#00ff00" stroke="#111" stroke-width=".9"></ellipse>
<ellipse cx="15" cy="13" rx="2.6" ry="1.5" fill="#00ffff" stroke="#111" stroke-width=".9"></ellipse>
</svg>
<span class="t f" style="left: 294.5px; top: 442px; font-size: 11px; color: rgb(0, 0, 0); --w: 69.8px; display: inline-block; transform-origin: 0px 0px; transform: scaleX(0.9436);">RawFormulas0</span>
<div class="a" style="left:264px;top:463px;width:10px;height:1px;background:repeating-linear-gradient(90deg,#808080 0 1px,transparent 1px 2px)"></div>
<svg class="a" style="left:273px;top:455.5px" width="18" height="15">
<path d="M4 10l6-6 M8.5 5l8 8 M15.5 4l-6.5 6.5" stroke="#111" fill="none" stroke-width="1" stroke-dasharray="1 .7"></path>
<ellipse cx="10" cy="4" rx="1.4" ry="2.8" transform="rotate(15 10 4)" fill="#ffff00" stroke="#111" stroke-width=".9"></ellipse>
<ellipse cx="14.3" cy="4.5" rx="1.4" ry="2.8" transform="rotate(-15 14.3 4.5)" fill="#ff00ff" stroke="#111" stroke-width=".9"></ellipse>
<ellipse cx="4" cy="10.5" rx="1.4" ry="2.8" transform="rotate(-15 4 10.5)" fill="#ff00ff" stroke="#111" stroke-width=".9"></ellipse>
<ellipse cx="9.5" cy="11" rx="2.6" ry="1.6" fill="#00ff00" stroke="#111" stroke-width=".9"></ellipse>
<ellipse cx="15" cy="13" rx="2.6" ry="1.5" fill="#00ffff" stroke="#111" stroke-width=".9"></ellipse>
</svg>
<span class="t f" style="left: 294.5px; top: 458px; font-size: 11px; color: rgb(0, 0, 0); --w: 147.7px; display: inline-block; transform-origin: 0px 0px; transform: scaleX(0.9512);">ReviewWSCompletionProcess3</span>
<div class="a" style="left:264px;top:479px;width:10px;height:1px;background:repeating-linear-gradient(90deg,#808080 0 1px,transparent 1px 2px)"></div>
<svg class="a" style="left:273px;top:471.5px" width="18" height="15">
<path d="M4 10l6-6 M8.5 5l8 8 M15.5 4l-6.5 6.5" stroke="#111" fill="none" stroke-width="1" stroke-dasharray="1 .7"></path>
<ellipse cx="10" cy="4" rx="1.4" ry="2.8" transform="rotate(15 10 4)" fill="#ffff00" stroke="#111" stroke-width=".9"></ellipse>
<ellipse cx="14.3" cy="4.5" rx="1.4" ry="2.8" transform="rotate(-15 14.3 4.5)" fill="#ff00ff" stroke="#111" stroke-width=".9"></ellipse>
<ellipse cx="4" cy="10.5" rx="1.4" ry="2.8" transform="rotate(-15 4 10.5)" fill="#ff00ff" stroke="#111" stroke-width=".9"></ellipse>
<ellipse cx="9.5" cy="11" rx="2.6" ry="1.6" fill="#00ff00" stroke="#111" stroke-width=".9"></ellipse>
<ellipse cx="15" cy="13" rx="2.6" ry="1.5" fill="#00ffff" stroke="#111" stroke-width=".9"></ellipse>
</svg>
<span class="t f" style="left: 294.5px; top: 474px; font-size: 11px; color: rgb(0, 0, 0); --w: 97.6px; display: inline-block; transform-origin: 0px 0px; transform: scaleX(0.9675);">UNIVMatchTestFunc</span>
<div class="a" style="left:575px;top:210px;width:1324px;height:659px;border-top:2px solid #a0a0a0;border-left:2px solid #a0a0a0;border-right:1px solid #fff;border-bottom:1px solid #fff"></div>
<div class="a" style="left:577px;top:212px;width:1321px;height:656px;border-top:1px solid #696969;border-left:1px solid #696969;border-right:1px solid #e3e3e3;border-bottom:1px solid #e3e3e3"></div>
<div class="a" style="left:587px;top:214px;width:646px;height:22px;background:#fff;border:1px solid #7a7a7a"></div>
<span class="t f" style="left: 591px; top: 218px; font-size: 12px; font-weight: bold; color: rgb(0, 0, 0); --w: 53px; display: inline-block; transform-origin: 0px 0px; transform: scaleX(1.0059);">(General)</span>
<svg class="a" style="left:1216px;top:220px" width="12" height="10"><path d="M1.5 3l4.5 4.5 4.5-4.5" fill="none" stroke="#444"></path></svg>
<div class="a" style="left:1242px;top:214px;width:646px;height:22px;background:#fff;border:1px solid #7a7a7a"></div>
<span class="t f" style="left: 1246px; top: 218px; font-size: 12px; font-weight: bold; color: rgb(0, 0, 0); --w: 76px; display: inline-block; transform-origin: 0px 0px; transform: scaleX(0.9496);">(Declarations)</span>
<svg class="a" style="left:1872px;top:220px" width="12" height="10"><path d="M1.5 3l4.5 4.5 4.5-4.5" fill="none" stroke="#444"></path></svg>
<div class="a" style="left:578px;top:238px;width:1319px;height:2px;background:#a0a0a0"></div>
<div class="a" style="left:599px;top:240px;width:1281px;height:610px;background:#fff;border-left:1px solid #000"></div>
<div class="a" style="left:600px;top:257px;width:1280px;height:1px;background:#8c8c8c"></div>
<div class="a" style="left:1880px;top:240px;width:15px;height:610px;background:#f0f0f0"></div>
<div class="a btn3d" style="left:1880px;top:240px;width:15px;height:7px"></div>
<svg class="a" style="left:1880px;top:248px" width="15" height="13"><path d="M3.5 8.5l4-4 4 4" fill="none" stroke="#606060" stroke-width="2"></path></svg>
<div class="a" style="left:1880px;top:261px;width:15px;height:504px;background:#cdcdcd"></div>
<svg class="a" style="left:1880px;top:836px" width="15" height="13"><path d="M3.5 4.5l4 4 4-4" fill="none" stroke="#606060" stroke-width="2"></path></svg>
<div class="a" style="left:578px;top:850px;width:1319px;height:17px;background:#f0f0f0"></div>
<div class="a" style="left:630px;top:850px;width:190px;height:15px;background:#cdcdcd"></div>
<svg class="a" style="left:615px;top:850px" width="14" height="15"><path d="M8.5 3.5l-4 4 4 4" fill="none" stroke="#606060" stroke-width="2"></path></svg>
<svg class="a" style="left:1864px;top:850px" width="14" height="15"><path d="M5.5 3.5l4 4-4 4" fill="none" stroke="#606060" stroke-width="2"></path></svg>
<svg class="a" style="left:1884px;top:855px" width="10" height="10" fill="#a8a8a8"><rect x="6" y="0" width="2" height="2"></rect><rect x="3" y="3" width="2" height="2"></rect><rect x="6" y="3" width="2" height="2"></rect><rect x="0" y="6" width="2" height="2"></rect><rect x="3" y="6" width="2" height="2"></rect><rect x="6" y="6" width="2" height="2"></rect></svg>
<div class="a" style="left:578px;top:848px;width:18px;height:18px;background:#f0f0f0;border-top:1px solid #fff;border-left:1px solid #fff;border-right:2px solid #696969;border-bottom:2px solid #696969"></div>
<div class="a" style="left:596px;top:848px;width:17px;height:18px;background:#f0f0f0;border-top:2px solid #696969;border-left:2px solid #696969"></div>
<svg class="a" style="left:580px;top:851px" width="34" height="14" stroke="#000"><path d="M3 2.5h9 M3 5.5h9 M20 3.5h11 M23 6.5h8 M20 9.5h11 M23 12.5h8"></path></svg>
<div class="a" style="left:575px;top:876px;width:1324px;height:8px;background:#bfcddb;overflow:hidden"><span class="t f" style="left: 2px; top: 1px; font-size: 12px; color: rgb(0, 0, 0); --w: 56px; display: inline-block; transform-origin: 0px 0px; transform: scaleX(0.9994);">Immediate</span></div>
<div class="a" style="left:1878px;top:877px;width:20px;height:7px;background:#f0f0f0;border-top:1px solid #fff;border-left:1px solid #fff;border-right:1px solid #888;overflow:hidden"><svg class="a" style="left:3px;top:3px" width="14" height="14"><path d="M2.5 2.5l9 9 M11.5 2.5l-9 9" stroke="#000" stroke-width="1.8"></path></svg></div>
<svg class="a" style="left:605px;top:260px" width="515" height="34"><path d="M6 11 Q60 9 120 10 Q250 8 380 7 Q450 5 508 4 L508 24 Q420 27 300 27 Q150 30 6 27z" fill="#ffff00"></path></svg>
<svg class="a" style="left:605px;top:418px" width="420" height="32"><path d="M8 11 Q40 8 90 7 Q200 6 260 9 Q300 12 340 8 Q370 2 395 6 Q412 8 414 10 L414 26 Q380 24 330 26 Q250 28 150 27 Q60 29 8 27z" fill="#ffff00"></path></svg>
<div class="a" style="left:600px;top:240px;width:1280px;height:610px;overflow:hidden"><div class="mono a" style="left:11px;top:3px;color:#000"><span class="kw">Option</span> <span class="kw">Explicit</span>

<span class="cm">'Clearing all existing Data from the Report to begin new Report</span>
<span class="kw">Sub</span> SetupNewPVreport_0_or_8()
    <span class="kw">Dim</span> PV <span class="kw">As</span> Workbook
    <span class="kw">Dim</span> RAW <span class="kw">As</span> Worksheet
    <span class="kw">Dim</span> rValueCLEARALL <span class="kw">As</span> <span class="kw">Variant</span>
    <span class="kw">Dim</span> completeMSG <span class="kw">As</span> <span class="kw">Variant</span>

    <span class="kw">Set</span> PV = ThisWorkbook
    <span class="kw">Set</span> RAW = ThisWorkbook.Sheets("RAW")

<span class="cm">'rValueCLEARALL Message BOX asking if user is sure</span>
    rValueCLEARALL = MsgBox("Are you sure you want all the old report data cleared so you can start a new report?" _
    &amp; vbNewLine &amp; "If you want to make a quick copy of report, select (NO) then run button NewWorkBook7", vbYesNo, "Setting up blank PV Template")
<span class="cm">'if yes is selected then</span>
        <span class="kw">If</span> rValueCLEARALL = vbYes <span class="kw">Then</span>
    <span class="cm">'Delete PV Worksheets</span>
            PV.Sheets("WF").Delete
            PV.Sheets("REVIEW").Delete
            PV.Sheets("MSA PV REPORT MONTH YEAR").Delete

            PV.Sheets("RAW").Activate
    <span class="cm">'Delete all VLOOKUP Formula columns P - V in RAW Worksheet</span>
            RAW.Columns("P:V").Delete
            <span class="cm">'Columns(PV).EntireColumn.Delete</span>
    <span class="cm">'Delete all rows of data from RAW Worksheet</span>
            RAW.UsedRange.Offset(1, 0).Resize(RAW.UsedRange.Rows.Count - 1).Rows.Delete
    <span class="cm">'Re-orientate User to 1st row, 1st col</span>
            Range("a1").Select
            ActiveWorkbook.Save
    <span class="cm">'Display Messagebox Complete confirmation</span>
            completeMSG = MsgBox("You may paste your data in the RAW worksheet!" &amp; vbNewLine &amp; vbNewLine &amp; "You are now ready to begin working in your new PV Report")

<span class="cm">'if no is selected then</span>
    <span class="kw">ElseIf</span> rValueCLEARALL = vbNo <span class="kw">Then</span>
    <span class="kw">End</span> <span class="kw">If</span></div></div>
<svg class="a" style="left:1873px;top:756px" width="7" height="12"><!--ibeam--><path d="M0.5 1h5 M3 1v9 M0.5 10h5" stroke="#111" stroke-width="1.2"></path><path d="M3.8 2.5v6" stroke="#3a8ad8" stroke-width="1"></path><path d="M1.5 1.8h1 M1.5 9.2h1" stroke="#e89020"></path></svg>
</body></html>
